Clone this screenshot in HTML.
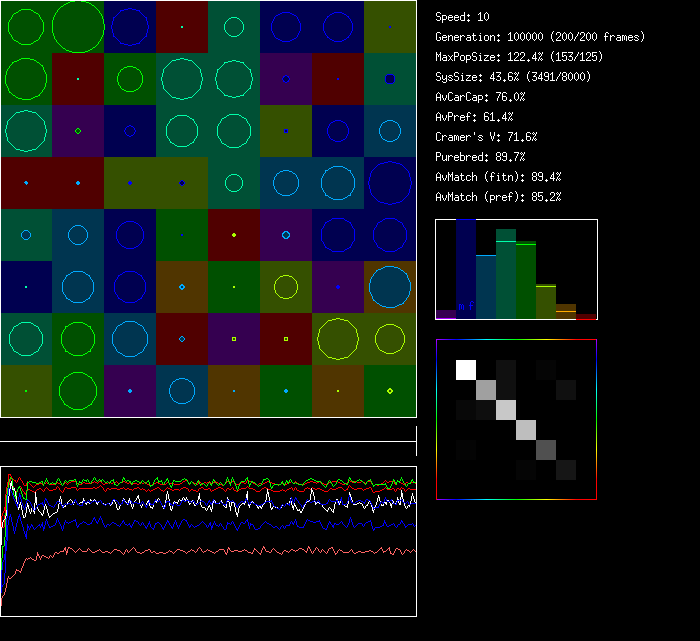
<!DOCTYPE html>
<html lang="en"><head><meta charset="utf-8"><title>Simulation</title>
<style>html,body{margin:0;padding:0;background:#000;overflow:hidden}body{width:700px;height:641px;position:relative;font-family:"Liberation Mono",monospace}svg{display:block;position:absolute;left:0;top:0}.t{position:absolute;left:436px;margin:0;font:10px/13px "Liberation Mono",monospace;color:transparent;white-space:pre;height:13px;overflow:hidden}</style></head><body>
<svg width="700" height="641" viewBox="0 0 700 641" shape-rendering="crispEdges">
<rect width="700" height="641" fill="#000"/>
<rect x="0" y="1" width="52" height="52" fill="#005000"/>
<rect x="52" y="1" width="52" height="52" fill="#005000"/>
<rect x="104" y="1" width="52" height="52" fill="#000050"/>
<rect x="156" y="1" width="52" height="52" fill="#500000"/>
<rect x="208" y="1" width="52" height="52" fill="#005035"/>
<rect x="260" y="1" width="52" height="52" fill="#000050"/>
<rect x="312" y="1" width="52" height="52" fill="#000050"/>
<rect x="364" y="1" width="52" height="52" fill="#355000"/>
<rect x="0" y="53" width="52" height="52" fill="#005000"/>
<rect x="52" y="53" width="52" height="52" fill="#500000"/>
<rect x="104" y="53" width="52" height="52" fill="#005000"/>
<rect x="156" y="53" width="52" height="52" fill="#005035"/>
<rect x="208" y="53" width="52" height="52" fill="#005035"/>
<rect x="260" y="53" width="52" height="52" fill="#350050"/>
<rect x="312" y="53" width="52" height="52" fill="#500000"/>
<rect x="364" y="53" width="52" height="52" fill="#005035"/>
<rect x="0" y="105" width="52" height="52" fill="#005035"/>
<rect x="52" y="105" width="52" height="52" fill="#350050"/>
<rect x="104" y="105" width="52" height="52" fill="#000050"/>
<rect x="156" y="105" width="52" height="52" fill="#005035"/>
<rect x="208" y="105" width="52" height="52" fill="#005035"/>
<rect x="260" y="105" width="52" height="52" fill="#355000"/>
<rect x="312" y="105" width="52" height="52" fill="#000050"/>
<rect x="364" y="105" width="52" height="52" fill="#003550"/>
<rect x="0" y="157" width="52" height="52" fill="#500000"/>
<rect x="52" y="157" width="52" height="52" fill="#500000"/>
<rect x="104" y="157" width="52" height="52" fill="#355000"/>
<rect x="156" y="157" width="52" height="52" fill="#355000"/>
<rect x="208" y="157" width="52" height="52" fill="#005035"/>
<rect x="260" y="157" width="52" height="52" fill="#003550"/>
<rect x="312" y="157" width="52" height="52" fill="#003550"/>
<rect x="364" y="157" width="52" height="52" fill="#000050"/>
<rect x="0" y="209" width="52" height="52" fill="#005035"/>
<rect x="52" y="209" width="52" height="52" fill="#003550"/>
<rect x="104" y="209" width="52" height="52" fill="#000050"/>
<rect x="156" y="209" width="52" height="52" fill="#005000"/>
<rect x="208" y="209" width="52" height="52" fill="#500000"/>
<rect x="260" y="209" width="52" height="52" fill="#350050"/>
<rect x="312" y="209" width="52" height="52" fill="#000050"/>
<rect x="364" y="209" width="52" height="52" fill="#000050"/>
<rect x="0" y="261" width="52" height="52" fill="#000050"/>
<rect x="52" y="261" width="52" height="52" fill="#003550"/>
<rect x="104" y="261" width="52" height="52" fill="#000050"/>
<rect x="156" y="261" width="52" height="52" fill="#503500"/>
<rect x="208" y="261" width="52" height="52" fill="#005000"/>
<rect x="260" y="261" width="52" height="52" fill="#355000"/>
<rect x="312" y="261" width="52" height="52" fill="#350050"/>
<rect x="364" y="261" width="52" height="52" fill="#503500"/>
<rect x="0" y="313" width="52" height="52" fill="#005035"/>
<rect x="52" y="313" width="52" height="52" fill="#005000"/>
<rect x="104" y="313" width="52" height="52" fill="#003550"/>
<rect x="156" y="313" width="52" height="52" fill="#500000"/>
<rect x="208" y="313" width="52" height="52" fill="#350050"/>
<rect x="260" y="313" width="52" height="52" fill="#500000"/>
<rect x="312" y="313" width="52" height="52" fill="#355000"/>
<rect x="364" y="313" width="52" height="52" fill="#355000"/>
<rect x="0" y="365" width="52" height="52" fill="#355000"/>
<rect x="52" y="365" width="52" height="52" fill="#005000"/>
<rect x="104" y="365" width="52" height="52" fill="#350050"/>
<rect x="156" y="365" width="52" height="52" fill="#003550"/>
<rect x="208" y="365" width="52" height="52" fill="#503500"/>
<rect x="260" y="365" width="52" height="52" fill="#005000"/>
<rect x="312" y="365" width="52" height="52" fill="#503500"/>
<rect x="364" y="365" width="52" height="52" fill="#005000"/>
<rect x="436" y="310" width="20" height="9" fill="#350050"/>
<rect x="456" y="220" width="20" height="99" fill="#000050"/>
<rect x="476" y="256" width="20" height="63" fill="#003550"/>
<rect x="496" y="229" width="20" height="90" fill="#005035"/>
<rect x="516" y="241" width="20" height="78" fill="#005000"/>
<rect x="536" y="284" width="20" height="35" fill="#355000"/>
<rect x="556" y="304" width="20" height="15" fill="#503500"/>
<rect x="576" y="314" width="20" height="5" fill="#500000"/>
<rect x="456" y="360" width="20" height="20" fill="#ffffff"/>
<rect x="496" y="360" width="20" height="20" fill="#101010"/>
<rect x="536" y="360" width="20" height="20" fill="#050505"/>
<rect x="476" y="380" width="20" height="20" fill="#a0a0a0"/>
<rect x="496" y="380" width="20" height="20" fill="#101010"/>
<rect x="556" y="380" width="20" height="20" fill="#101010"/>
<rect x="456" y="400" width="20" height="20" fill="#080808"/>
<rect x="476" y="400" width="20" height="20" fill="#0e0e0e"/>
<rect x="496" y="400" width="20" height="20" fill="#c8c8c8"/>
<rect x="516" y="420" width="20" height="20" fill="#bebebe"/>
<rect x="456" y="440" width="20" height="20" fill="#040404"/>
<rect x="536" y="440" width="20" height="20" fill="#505050"/>
<rect x="516" y="460" width="20" height="20" fill="#050505"/>
<rect x="556" y="460" width="20" height="20" fill="#161616"/>
<path fill="#ffffff" d="M0 0h417v1h-417zM0 1h1v417h-1zM416 1h1v417h-1zM437 12h3v1h-3zM464 12h1v9h-1zM480 12h1v9h-1zM486 12h1v1h-1zM436 13h1v3h-1zM440 13h1v1h-1zM479 13h1v1h-1zM485 13h1v1h-1zM487 13h1v1h-1zM468 14h1v3h-1zM478 14h1v1h-1zM484 14h1v5h-1zM488 14h1v5h-1zM442 15h4v1h-4zM449 15h3v1h-3zM455 15h3v1h-3zM461 15h3v1h-3zM467 15h1v1h-1zM469 15h1v1h-1zM437 16h3v1h-3zM442 16h1v7h-1zM446 16h1v3h-1zM448 16h1v4h-1zM452 16h1v2h-1zM454 16h1v4h-1zM458 16h1v2h-1zM460 16h1v4h-1zM440 17h1v3h-1zM449 17h3v1h-3zM455 17h3v1h-3zM436 19h1v1h-1zM443 19h3v1h-3zM452 19h1v1h-1zM458 19h1v1h-1zM468 19h1v3h-1zM485 19h1v1h-1zM487 19h1v1h-1zM437 20h3v1h-3zM449 20h3v1h-3zM455 20h3v1h-3zM461 20h3v1h-3zM467 20h1v1h-1zM469 20h1v1h-1zM478 20h2v1h-2zM481 20h2v1h-2zM486 20h1v1h-1zM553 31h1v1h-1zM641 31h1v1h-1zM437 32h3v1h-3zM510 32h1v9h-1zM516 32h1v1h-1zM522 32h1v1h-1zM528 32h1v1h-1zM534 32h1v1h-1zM540 32h1v1h-1zM552 32h1v2h-1zM557 32h3v1h-3zM564 32h1v1h-1zM570 32h1v1h-1zM578 32h1v2h-1zM581 32h3v1h-3zM588 32h1v1h-1zM594 32h1v1h-1zM606 32h2v1h-2zM642 32h1v2h-1zM436 33h1v7h-1zM440 33h1v1h-1zM473 33h1v7h-1zM480 33h1v1h-1zM509 33h1v1h-1zM515 33h1v1h-1zM517 33h1v1h-1zM521 33h1v1h-1zM523 33h1v1h-1zM527 33h1v1h-1zM529 33h1v1h-1zM533 33h1v1h-1zM535 33h1v1h-1zM539 33h1v1h-1zM541 33h1v1h-1zM556 33h1v2h-1zM560 33h1v3h-1zM563 33h1v1h-1zM565 33h1v1h-1zM569 33h1v1h-1zM571 33h1v1h-1zM580 33h1v2h-1zM584 33h1v3h-1zM587 33h1v1h-1zM589 33h1v1h-1zM593 33h1v1h-1zM595 33h1v1h-1zM605 33h1v8h-1zM608 33h1v1h-1zM498 34h1v3h-1zM508 34h1v1h-1zM514 34h1v5h-1zM518 34h1v5h-1zM520 34h1v5h-1zM524 34h1v5h-1zM526 34h1v5h-1zM530 34h1v5h-1zM532 34h1v5h-1zM536 34h1v5h-1zM538 34h1v5h-1zM542 34h1v5h-1zM551 34h1v5h-1zM562 34h1v5h-1zM566 34h1v5h-1zM568 34h1v5h-1zM572 34h1v5h-1zM577 34h1v2h-1zM586 34h1v5h-1zM590 34h1v5h-1zM592 34h1v5h-1zM596 34h1v5h-1zM643 34h1v5h-1zM443 35h3v1h-3zM448 35h1v6h-1zM450 35h2v1h-2zM455 35h3v1h-3zM460 35h1v6h-1zM462 35h2v1h-2zM467 35h3v1h-3zM472 35h1v1h-1zM474 35h2v1h-2zM479 35h2v1h-2zM485 35h3v1h-3zM490 35h1v6h-1zM492 35h2v1h-2zM497 35h1v1h-1zM499 35h1v1h-1zM610 35h1v6h-1zM612 35h2v1h-2zM617 35h3v1h-3zM622 35h2v1h-2zM625 35h1v1h-1zM629 35h3v1h-3zM635 35h3v1h-3zM442 36h1v4h-1zM446 36h1v2h-1zM449 36h1v1h-1zM452 36h1v5h-1zM454 36h1v4h-1zM458 36h1v2h-1zM461 36h1v1h-1zM464 36h1v1h-1zM470 36h1v5h-1zM480 36h1v5h-1zM484 36h1v4h-1zM488 36h1v4h-1zM491 36h1v1h-1zM494 36h1v5h-1zM559 36h1v1h-1zM576 36h1v1h-1zM583 36h1v1h-1zM604 36h1v1h-1zM606 36h2v1h-2zM611 36h1v1h-1zM614 36h1v1h-1zM620 36h1v5h-1zM622 36h1v5h-1zM624 36h1v4h-1zM626 36h1v5h-1zM628 36h1v4h-1zM632 36h1v2h-1zM634 36h1v1h-1zM638 36h1v1h-1zM439 37h2v1h-2zM443 37h3v1h-3zM455 37h3v1h-3zM467 37h3v1h-3zM558 37h1v1h-1zM575 37h1v2h-1zM582 37h1v1h-1zM617 37h3v1h-3zM629 37h3v1h-3zM635 37h2v1h-2zM440 38h1v2h-1zM466 38h1v2h-1zM557 38h1v1h-1zM581 38h1v1h-1zM616 38h1v2h-1zM637 38h1v1h-1zM446 39h1v1h-1zM458 39h1v1h-1zM476 39h1v1h-1zM498 39h1v3h-1zM515 39h1v1h-1zM517 39h1v1h-1zM521 39h1v1h-1zM523 39h1v1h-1zM527 39h1v1h-1zM529 39h1v1h-1zM533 39h1v1h-1zM535 39h1v1h-1zM539 39h1v1h-1zM541 39h1v1h-1zM552 39h1v2h-1zM556 39h1v2h-1zM563 39h1v1h-1zM565 39h1v1h-1zM569 39h1v1h-1zM571 39h1v1h-1zM574 39h1v2h-1zM580 39h1v2h-1zM587 39h1v1h-1zM589 39h1v1h-1zM593 39h1v1h-1zM595 39h1v1h-1zM632 39h1v1h-1zM634 39h1v1h-1zM638 39h1v1h-1zM642 39h1v2h-1zM437 40h3v1h-3zM443 40h3v1h-3zM455 40h3v1h-3zM467 40h3v1h-3zM474 40h2v1h-2zM479 40h1v1h-1zM481 40h1v1h-1zM485 40h3v1h-3zM497 40h1v1h-1zM499 40h1v1h-1zM508 40h2v1h-2zM511 40h2v1h-2zM516 40h1v1h-1zM522 40h1v1h-1zM528 40h1v1h-1zM534 40h1v1h-1zM540 40h1v1h-1zM557 40h4v1h-4zM564 40h1v1h-1zM570 40h1v1h-1zM581 40h4v1h-4zM588 40h1v1h-1zM594 40h1v1h-1zM617 40h3v1h-3zM629 40h3v1h-3zM635 40h3v1h-3zM553 41h1v1h-1zM641 41h1v1h-1zM553 51h1v1h-1zM599 51h1v1h-1zM436 52h1v9h-1zM440 52h1v9h-1zM454 52h4v1h-4zM473 52h3v1h-3zM510 52h1v9h-1zM515 52h3v1h-3zM521 52h3v1h-3zM535 52h1v9h-1zM539 52h1v1h-1zM542 52h1v2h-1zM552 52h1v2h-1zM558 52h1v9h-1zM562 52h5v1h-5zM568 52h5v1h-5zM578 52h1v2h-1zM582 52h1v9h-1zM587 52h3v1h-3zM592 52h5v1h-5zM600 52h1v2h-1zM454 53h1v8h-1zM458 53h1v3h-1zM472 53h1v3h-1zM476 53h1v1h-1zM480 53h1v1h-1zM509 53h1v1h-1zM514 53h1v2h-1zM518 53h1v3h-1zM520 53h1v2h-1zM524 53h1v3h-1zM538 53h1v1h-1zM540 53h1v1h-1zM557 53h1v1h-1zM562 53h1v4h-1zM572 53h1v1h-1zM581 53h1v1h-1zM586 53h1v2h-1zM590 53h1v3h-1zM592 53h1v4h-1zM437 54h1v1h-1zM439 54h1v1h-1zM498 54h1v3h-1zM508 54h1v1h-1zM534 54h1v1h-1zM539 54h1v1h-1zM541 54h1v2h-1zM551 54h1v5h-1zM556 54h1v1h-1zM571 54h1v1h-1zM577 54h1v2h-1zM580 54h1v1h-1zM601 54h1v5h-1zM438 55h1v2h-1zM443 55h3v1h-3zM448 55h1v1h-1zM452 55h1v1h-1zM461 55h3v1h-3zM466 55h4v1h-4zM479 55h2v1h-2zM484 55h5v1h-5zM491 55h3v1h-3zM497 55h1v1h-1zM499 55h1v1h-1zM533 55h1v2h-1zM564 55h2v1h-2zM570 55h1v2h-1zM594 55h2v1h-2zM446 56h1v5h-1zM449 56h1v1h-1zM451 56h1v1h-1zM455 56h3v1h-3zM460 56h1v4h-1zM464 56h1v4h-1zM466 56h1v7h-1zM470 56h1v3h-1zM473 56h3v1h-3zM480 56h1v5h-1zM487 56h1v1h-1zM490 56h1v4h-1zM494 56h1v2h-1zM517 56h1v1h-1zM523 56h1v1h-1zM540 56h1v1h-1zM563 56h1v1h-1zM566 56h1v4h-1zM569 56h1v1h-1zM571 56h1v1h-1zM576 56h1v1h-1zM589 56h1v1h-1zM593 56h1v1h-1zM596 56h1v4h-1zM443 57h3v1h-3zM450 57h1v2h-1zM476 57h1v3h-1zM486 57h1v1h-1zM491 57h3v1h-3zM516 57h1v1h-1zM522 57h1v1h-1zM532 57h1v2h-1zM539 57h1v2h-1zM572 57h1v3h-1zM575 57h1v2h-1zM588 57h1v1h-1zM442 58h1v2h-1zM485 58h1v1h-1zM515 58h1v1h-1zM521 58h1v1h-1zM533 58h2v1h-2zM536 58h1v1h-1zM541 58h1v1h-1zM587 58h1v1h-1zM449 59h1v1h-1zM451 59h1v1h-1zM467 59h3v1h-3zM472 59h1v1h-1zM484 59h1v2h-1zM494 59h1v1h-1zM498 59h1v3h-1zM514 59h1v2h-1zM520 59h1v2h-1zM528 59h1v3h-1zM538 59h1v2h-1zM540 59h1v1h-1zM542 59h1v1h-1zM552 59h1v2h-1zM562 59h1v1h-1zM568 59h1v1h-1zM574 59h1v2h-1zM586 59h1v2h-1zM592 59h1v1h-1zM600 59h1v2h-1zM443 60h3v1h-3zM448 60h1v1h-1zM452 60h1v1h-1zM461 60h3v1h-3zM473 60h3v1h-3zM479 60h1v1h-1zM481 60h1v1h-1zM485 60h4v1h-4zM491 60h3v1h-3zM497 60h1v1h-1zM499 60h1v1h-1zM508 60h2v1h-2zM511 60h2v1h-2zM515 60h4v1h-4zM521 60h4v1h-4zM527 60h1v1h-1zM529 60h1v1h-1zM541 60h1v1h-1zM556 60h2v1h-2zM559 60h2v1h-2zM563 60h3v1h-3zM569 60h3v1h-3zM580 60h2v1h-2zM583 60h2v1h-2zM587 60h4v1h-4zM593 60h3v1h-3zM553 61h1v1h-1zM599 61h1v1h-1zM529 71h1v1h-1zM587 71h1v1h-1zM437 72h3v1h-3zM455 72h3v1h-3zM493 72h1v9h-1zM496 72h5v1h-5zM509 72h3v1h-3zM515 72h1v1h-1zM518 72h1v2h-1zM528 72h1v2h-1zM532 72h5v1h-5zM541 72h1v9h-1zM545 72h3v1h-3zM552 72h1v9h-1zM560 72h1v2h-1zM563 72h3v1h-3zM570 72h1v1h-1zM576 72h1v1h-1zM582 72h1v1h-1zM588 72h1v2h-1zM436 73h1v3h-1zM440 73h1v1h-1zM454 73h1v3h-1zM458 73h1v1h-1zM462 73h1v1h-1zM500 73h1v1h-1zM508 73h1v7h-1zM512 73h1v1h-1zM514 73h1v1h-1zM516 73h1v1h-1zM536 73h1v1h-1zM544 73h1v3h-1zM548 73h1v7h-1zM551 73h1v1h-1zM562 73h1v3h-1zM566 73h1v3h-1zM569 73h1v1h-1zM571 73h1v1h-1zM575 73h1v1h-1zM577 73h1v1h-1zM581 73h1v1h-1zM583 73h1v1h-1zM480 74h1v3h-1zM492 74h1v1h-1zM499 74h1v1h-1zM515 74h1v1h-1zM517 74h1v2h-1zM527 74h1v5h-1zM535 74h1v1h-1zM540 74h1v1h-1zM550 74h1v1h-1zM559 74h1v2h-1zM568 74h1v5h-1zM572 74h1v5h-1zM574 74h1v5h-1zM578 74h1v5h-1zM580 74h1v5h-1zM584 74h1v5h-1zM589 74h1v5h-1zM442 75h1v4h-1zM446 75h1v7h-1zM449 75h3v1h-3zM461 75h2v1h-2zM466 75h5v1h-5zM473 75h3v1h-3zM479 75h1v1h-1zM481 75h1v1h-1zM491 75h1v2h-1zM498 75h1v2h-1zM534 75h1v2h-1zM539 75h1v2h-1zM437 76h3v1h-3zM448 76h1v1h-1zM452 76h1v1h-1zM455 76h3v1h-3zM462 76h1v5h-1zM469 76h1v1h-1zM472 76h1v4h-1zM476 76h1v2h-1zM497 76h1v1h-1zM499 76h1v1h-1zM509 76h3v1h-3zM516 76h1v1h-1zM533 76h1v1h-1zM535 76h1v1h-1zM545 76h3v1h-3zM558 76h1v1h-1zM563 76h3v1h-3zM440 77h1v3h-1zM449 77h2v1h-2zM458 77h1v3h-1zM468 77h1v1h-1zM473 77h3v1h-3zM490 77h1v2h-1zM500 77h1v3h-1zM512 77h1v3h-1zM515 77h1v2h-1zM536 77h1v3h-1zM538 77h1v2h-1zM557 77h1v2h-1zM562 77h1v3h-1zM566 77h1v3h-1zM445 78h1v1h-1zM451 78h1v1h-1zM467 78h1v1h-1zM491 78h2v1h-2zM494 78h1v1h-1zM517 78h1v1h-1zM539 78h2v1h-2zM542 78h1v1h-1zM436 79h1v1h-1zM443 79h2v1h-2zM448 79h1v1h-1zM452 79h1v1h-1zM454 79h1v1h-1zM466 79h1v2h-1zM476 79h1v1h-1zM480 79h1v3h-1zM496 79h1v1h-1zM504 79h1v3h-1zM514 79h1v2h-1zM516 79h1v1h-1zM518 79h1v1h-1zM528 79h1v2h-1zM532 79h1v1h-1zM544 79h1v1h-1zM556 79h1v2h-1zM569 79h1v1h-1zM571 79h1v1h-1zM575 79h1v1h-1zM577 79h1v1h-1zM581 79h1v1h-1zM583 79h1v1h-1zM588 79h1v2h-1zM437 80h3v1h-3zM449 80h3v1h-3zM455 80h3v1h-3zM461 80h1v1h-1zM463 80h1v1h-1zM467 80h4v1h-4zM473 80h3v1h-3zM479 80h1v1h-1zM481 80h1v1h-1zM497 80h3v1h-3zM503 80h1v1h-1zM505 80h1v1h-1zM509 80h3v1h-3zM517 80h1v1h-1zM533 80h3v1h-3zM545 80h3v1h-3zM550 80h2v1h-2zM553 80h2v1h-2zM563 80h3v1h-3zM570 80h1v1h-1zM576 80h1v1h-1zM582 80h1v1h-1zM442 81h1v1h-1zM529 81h1v1h-1zM587 81h1v1h-1zM443 82h3v1h-3zM438 92h1v1h-1zM449 92h3v1h-3zM467 92h3v1h-3zM496 92h5v1h-5zM503 92h3v1h-3zM516 92h1v1h-1zM521 92h1v1h-1zM524 92h1v2h-1zM437 93h1v1h-1zM439 93h1v1h-1zM448 93h1v7h-1zM452 93h1v1h-1zM466 93h1v7h-1zM470 93h1v1h-1zM500 93h1v1h-1zM502 93h1v7h-1zM506 93h1v1h-1zM515 93h1v1h-1zM517 93h1v1h-1zM520 93h1v1h-1zM522 93h1v1h-1zM436 94h1v7h-1zM440 94h1v7h-1zM486 94h1v3h-1zM499 94h1v2h-1zM514 94h1v5h-1zM518 94h1v5h-1zM521 94h1v1h-1zM523 94h1v2h-1zM442 95h1v3h-1zM446 95h1v3h-1zM455 95h3v1h-3zM460 95h1v6h-1zM462 95h2v1h-2zM473 95h3v1h-3zM478 95h4v1h-4zM485 95h1v1h-1zM487 95h1v1h-1zM458 96h1v5h-1zM461 96h1v1h-1zM464 96h1v1h-1zM476 96h1v5h-1zM478 96h1v7h-1zM482 96h1v3h-1zM498 96h1v2h-1zM503 96h3v1h-3zM522 96h1v1h-1zM437 97h3v1h-3zM455 97h3v1h-3zM473 97h3v1h-3zM506 97h1v3h-1zM521 97h1v2h-1zM443 98h1v2h-1zM445 98h1v2h-1zM454 98h1v2h-1zM472 98h1v2h-1zM497 98h1v3h-1zM523 98h1v1h-1zM452 99h1v1h-1zM470 99h1v1h-1zM479 99h3v1h-3zM486 99h1v3h-1zM510 99h1v3h-1zM515 99h1v1h-1zM517 99h1v1h-1zM520 99h1v2h-1zM522 99h1v1h-1zM524 99h1v1h-1zM444 100h1v1h-1zM449 100h3v1h-3zM455 100h3v1h-3zM467 100h3v1h-3zM473 100h3v1h-3zM485 100h1v1h-1zM487 100h1v1h-1zM503 100h3v1h-3zM509 100h1v1h-1zM511 100h1v1h-1zM516 100h1v1h-1zM523 100h1v1h-1zM438 112h1v1h-1zM448 112h4v1h-4zM468 112h2v1h-2zM485 112h3v1h-3zM492 112h1v9h-1zM505 112h1v9h-1zM509 112h1v1h-1zM512 112h1v2h-1zM437 113h1v1h-1zM439 113h1v1h-1zM448 113h1v8h-1zM452 113h1v3h-1zM467 113h1v8h-1zM470 113h1v1h-1zM484 113h1v7h-1zM488 113h1v1h-1zM491 113h1v1h-1zM508 113h1v1h-1zM510 113h1v1h-1zM436 114h1v7h-1zM440 114h1v7h-1zM474 114h1v3h-1zM490 114h1v1h-1zM504 114h1v1h-1zM509 114h1v1h-1zM511 114h1v2h-1zM442 115h1v3h-1zM446 115h1v3h-1zM454 115h1v6h-1zM456 115h2v1h-2zM461 115h3v1h-3zM473 115h1v1h-1zM475 115h1v1h-1zM503 115h1v2h-1zM449 116h3v1h-3zM455 116h1v1h-1zM458 116h1v1h-1zM460 116h1v4h-1zM464 116h1v2h-1zM466 116h1v1h-1zM468 116h2v1h-2zM485 116h3v1h-3zM510 116h1v1h-1zM437 117h3v1h-3zM461 117h3v1h-3zM488 117h1v3h-1zM502 117h1v2h-1zM509 117h1v2h-1zM443 118h1v2h-1zM445 118h1v2h-1zM503 118h2v1h-2zM506 118h1v1h-1zM511 118h1v1h-1zM464 119h1v1h-1zM474 119h1v3h-1zM498 119h1v3h-1zM508 119h1v2h-1zM510 119h1v1h-1zM512 119h1v1h-1zM444 120h1v1h-1zM461 120h3v1h-3zM473 120h1v1h-1zM475 120h1v1h-1zM485 120h3v1h-3zM490 120h2v1h-2zM493 120h2v1h-2zM497 120h1v1h-1zM499 120h1v1h-1zM511 120h1v1h-1zM437 132h3v1h-3zM474 132h1v3h-1zM490 132h1v4h-1zM494 132h1v4h-1zM508 132h5v1h-5zM516 132h1v9h-1zM527 132h3v1h-3zM533 132h1v1h-1zM536 132h1v2h-1zM436 133h1v7h-1zM440 133h1v1h-1zM512 133h1v1h-1zM515 133h1v1h-1zM526 133h1v7h-1zM530 133h1v1h-1zM532 133h1v1h-1zM534 133h1v1h-1zM498 134h1v3h-1zM511 134h1v2h-1zM514 134h1v1h-1zM533 134h1v1h-1zM535 134h1v2h-1zM442 135h1v6h-1zM444 135h2v1h-2zM449 135h3v1h-3zM454 135h2v1h-2zM457 135h1v1h-1zM461 135h3v1h-3zM466 135h1v6h-1zM468 135h2v1h-2zM479 135h3v1h-3zM497 135h1v1h-1zM499 135h1v1h-1zM443 136h1v1h-1zM446 136h1v1h-1zM452 136h1v5h-1zM454 136h1v5h-1zM456 136h1v4h-1zM458 136h1v5h-1zM460 136h1v4h-1zM464 136h1v2h-1zM467 136h1v1h-1zM470 136h1v1h-1zM478 136h1v1h-1zM482 136h1v1h-1zM491 136h1v3h-1zM493 136h1v3h-1zM510 136h1v2h-1zM527 136h3v1h-3zM534 136h1v1h-1zM449 137h3v1h-3zM461 137h3v1h-3zM479 137h2v1h-2zM530 137h1v3h-1zM533 137h1v2h-1zM448 138h1v2h-1zM481 138h1v1h-1zM509 138h1v3h-1zM535 138h1v1h-1zM440 139h1v1h-1zM464 139h1v1h-1zM478 139h1v1h-1zM482 139h1v1h-1zM492 139h1v2h-1zM498 139h1v3h-1zM522 139h1v3h-1zM532 139h1v2h-1zM534 139h1v1h-1zM536 139h1v1h-1zM437 140h3v1h-3zM449 140h3v1h-3zM461 140h3v1h-3zM479 140h3v1h-3zM497 140h1v1h-1zM499 140h1v1h-1zM514 140h2v1h-2zM517 140h2v1h-2zM521 140h1v1h-1zM523 140h1v1h-1zM527 140h3v1h-3zM535 140h1v1h-1zM436 152h4v1h-4zM460 152h1v9h-1zM482 152h1v9h-1zM497 152h3v1h-3zM503 152h3v1h-3zM514 152h5v1h-5zM521 152h1v1h-1zM524 152h1v2h-1zM436 153h1v8h-1zM440 153h1v3h-1zM496 153h1v3h-1zM500 153h1v3h-1zM502 153h1v3h-1zM506 153h1v7h-1zM518 153h1v1h-1zM520 153h1v1h-1zM522 153h1v1h-1zM486 154h1v3h-1zM517 154h1v2h-1zM521 154h1v1h-1zM523 154h1v2h-1zM442 155h1v5h-1zM446 155h1v6h-1zM448 155h1v6h-1zM450 155h2v1h-2zM455 155h3v1h-3zM461 155h3v1h-3zM466 155h1v6h-1zM468 155h2v1h-2zM473 155h3v1h-3zM479 155h3v1h-3zM485 155h1v1h-1zM487 155h1v1h-1zM437 156h3v1h-3zM449 156h1v1h-1zM452 156h1v1h-1zM454 156h1v4h-1zM458 156h1v2h-1zM464 156h1v4h-1zM467 156h1v1h-1zM470 156h1v1h-1zM472 156h1v4h-1zM476 156h1v2h-1zM478 156h1v4h-1zM497 156h3v1h-3zM503 156h3v1h-3zM516 156h1v2h-1zM522 156h1v1h-1zM455 157h3v1h-3zM473 157h3v1h-3zM496 157h1v3h-1zM500 157h1v3h-1zM521 157h1v2h-1zM515 158h1v3h-1zM523 158h1v1h-1zM445 159h1v1h-1zM458 159h1v1h-1zM476 159h1v1h-1zM486 159h1v3h-1zM502 159h1v1h-1zM510 159h1v3h-1zM520 159h1v2h-1zM522 159h1v1h-1zM524 159h1v1h-1zM443 160h2v1h-2zM455 160h3v1h-3zM461 160h3v1h-3zM473 160h3v1h-3zM479 160h3v1h-3zM485 160h1v1h-1zM487 160h1v1h-1zM497 160h3v1h-3zM503 160h3v1h-3zM509 160h1v1h-1zM511 160h1v1h-1zM523 160h1v1h-1zM487 171h1v1h-1zM515 171h1v1h-1zM438 172h1v1h-1zM448 172h1v9h-1zM452 172h1v9h-1zM472 172h1v9h-1zM486 172h1v2h-1zM492 172h2v1h-2zM516 172h1v2h-1zM533 172h3v1h-3zM539 172h3v1h-3zM553 172h1v9h-1zM557 172h1v1h-1zM560 172h1v2h-1zM437 173h1v1h-1zM439 173h1v1h-1zM461 173h1v7h-1zM491 173h1v8h-1zM494 173h1v1h-1zM498 173h1v1h-1zM503 173h1v7h-1zM532 173h1v3h-1zM536 173h1v3h-1zM538 173h1v3h-1zM542 173h1v7h-1zM556 173h1v1h-1zM558 173h1v1h-1zM436 174h1v7h-1zM440 174h1v7h-1zM449 174h1v1h-1zM451 174h1v1h-1zM485 174h1v5h-1zM517 174h1v5h-1zM522 174h1v3h-1zM552 174h1v1h-1zM557 174h1v1h-1zM559 174h1v2h-1zM442 175h1v3h-1zM446 175h1v3h-1zM450 175h1v2h-1zM455 175h3v1h-3zM460 175h1v1h-1zM462 175h2v1h-2zM467 175h3v1h-3zM474 175h2v1h-2zM497 175h2v1h-2zM502 175h1v1h-1zM504 175h2v1h-2zM508 175h1v6h-1zM510 175h2v1h-2zM521 175h1v1h-1zM523 175h1v1h-1zM551 175h1v2h-1zM458 176h1v5h-1zM466 176h1v4h-1zM470 176h1v1h-1zM473 176h1v1h-1zM476 176h1v5h-1zM490 176h1v1h-1zM492 176h2v1h-2zM498 176h1v5h-1zM509 176h1v1h-1zM512 176h1v5h-1zM533 176h3v1h-3zM539 176h3v1h-3zM558 176h1v1h-1zM437 177h3v1h-3zM455 177h3v1h-3zM532 177h1v3h-1zM536 177h1v3h-1zM550 177h1v2h-1zM557 177h1v2h-1zM443 178h1v2h-1zM445 178h1v2h-1zM454 178h1v2h-1zM551 178h2v1h-2zM554 178h1v1h-1zM559 178h1v1h-1zM464 179h1v1h-1zM470 179h1v1h-1zM486 179h1v2h-1zM506 179h1v1h-1zM516 179h1v2h-1zM522 179h1v3h-1zM538 179h1v1h-1zM546 179h1v3h-1zM556 179h1v2h-1zM558 179h1v1h-1zM560 179h1v1h-1zM444 180h1v1h-1zM455 180h3v1h-3zM462 180h2v1h-2zM467 180h3v1h-3zM497 180h1v1h-1zM499 180h1v1h-1zM504 180h2v1h-2zM521 180h1v1h-1zM523 180h1v1h-1zM533 180h3v1h-3zM539 180h3v1h-3zM545 180h1v1h-1zM547 180h1v1h-1zM559 180h1v1h-1zM487 181h1v1h-1zM515 181h1v1h-1zM487 191h1v1h-1zM515 191h1v1h-1zM438 192h1v1h-1zM448 192h1v9h-1zM452 192h1v9h-1zM472 192h1v9h-1zM486 192h1v2h-1zM510 192h2v1h-2zM516 192h1v2h-1zM533 192h3v1h-3zM538 192h5v1h-5zM551 192h3v1h-3zM557 192h1v1h-1zM560 192h1v2h-1zM437 193h1v1h-1zM439 193h1v1h-1zM461 193h1v7h-1zM509 193h1v8h-1zM512 193h1v1h-1zM532 193h1v3h-1zM536 193h1v3h-1zM538 193h1v4h-1zM550 193h1v2h-1zM554 193h1v3h-1zM556 193h1v1h-1zM558 193h1v1h-1zM436 194h1v7h-1zM440 194h1v7h-1zM449 194h1v1h-1zM451 194h1v1h-1zM485 194h1v5h-1zM517 194h1v5h-1zM522 194h1v3h-1zM557 194h1v1h-1zM559 194h1v2h-1zM442 195h1v3h-1zM446 195h1v3h-1zM450 195h1v2h-1zM455 195h3v1h-3zM460 195h1v1h-1zM462 195h2v1h-2zM467 195h3v1h-3zM474 195h2v1h-2zM490 195h4v1h-4zM496 195h1v6h-1zM498 195h2v1h-2zM503 195h3v1h-3zM521 195h1v1h-1zM523 195h1v1h-1zM540 195h2v1h-2zM458 196h1v5h-1zM466 196h1v4h-1zM470 196h1v1h-1zM473 196h1v1h-1zM476 196h1v5h-1zM490 196h1v7h-1zM494 196h1v3h-1zM497 196h1v1h-1zM500 196h1v1h-1zM502 196h1v4h-1zM506 196h1v2h-1zM508 196h1v1h-1zM510 196h2v1h-2zM533 196h3v1h-3zM539 196h1v1h-1zM542 196h1v4h-1zM553 196h1v1h-1zM558 196h1v1h-1zM437 197h3v1h-3zM455 197h3v1h-3zM503 197h3v1h-3zM532 197h1v3h-1zM536 197h1v3h-1zM552 197h1v1h-1zM557 197h1v2h-1zM443 198h1v2h-1zM445 198h1v2h-1zM454 198h1v2h-1zM551 198h1v1h-1zM559 198h1v1h-1zM464 199h1v1h-1zM470 199h1v1h-1zM486 199h1v2h-1zM491 199h3v1h-3zM506 199h1v1h-1zM516 199h1v2h-1zM522 199h1v3h-1zM538 199h1v1h-1zM546 199h1v3h-1zM550 199h1v2h-1zM556 199h1v2h-1zM558 199h1v1h-1zM560 199h1v1h-1zM444 200h1v1h-1zM455 200h3v1h-3zM462 200h2v1h-2zM467 200h3v1h-3zM503 200h3v1h-3zM521 200h1v1h-1zM523 200h1v1h-1zM533 200h3v1h-3zM539 200h3v1h-3zM545 200h1v1h-1zM547 200h1v1h-1zM551 200h4v1h-4zM559 200h1v1h-1zM487 201h1v1h-1zM515 201h1v1h-1zM435 219h21v1h-21zM476 219h122v1h-122zM435 220h1v100h-1zM597 220h1v100h-1zM436 319h140v1h-140zM596 319h1v1h-1zM1 417h415v1h-415zM416 426h1v30h-1zM0 441h416v1h-416zM0 466h417v1h-417zM0 467h1v150h-1zM416 467h1v150h-1zM11 481h1v5h-1zM10 483h1v6h-1zM12 486h1v4h-1zM14 488h1v3h-1zM311 488h1v6h-1zM9 489h1v7h-1zM13 489h1v1h-1zM267 489h1v5h-1zM312 490h1v2h-1zM401 490h1v7h-1zM15 491h1v5h-1zM167 491h1v3h-1zM247 491h1v9h-1zM35 492h1v11h-1zM268 492h1v5h-1zM313 492h1v4h-1zM349 492h1v3h-1zM199 493h1v6h-1zM402 493h1v6h-1zM412 493h1v3h-1zM166 494h1v6h-1zM168 494h1v5h-1zM246 494h1v4h-1zM266 494h1v6h-1zM310 494h1v6h-1zM350 494h1v3h-1zM138 495h1v4h-1zM378 495h1v3h-1zM8 496h1v7h-1zM16 496h1v6h-1zM60 496h1v3h-1zM137 496h1v2h-1zM198 496h1v4h-1zM314 496h1v4h-1zM411 496h1v5h-1zM413 496h1v3h-1zM36 497h1v8h-1zM183 497h1v1h-1zM186 497h1v2h-1zM227 497h1v2h-1zM269 497h1v4h-1zM351 497h1v3h-1zM379 497h1v4h-1zM397 497h1v3h-1zM400 497h1v3h-1zM83 498h1v3h-1zM123 498h1v1h-1zM129 498h1v3h-1zM136 498h1v2h-1zM158 498h1v1h-1zM182 498h1v2h-1zM184 498h1v2h-1zM290 498h1v1h-1zM377 498h1v4h-1zM59 499h1v3h-1zM61 499h1v5h-1zM70 499h1v1h-1zM90 499h1v2h-1zM94 499h1v1h-1zM124 499h1v1h-1zM139 499h1v4h-1zM157 499h1v2h-1zM159 499h1v1h-1zM169 499h1v2h-1zM179 499h1v1h-1zM185 499h1v2h-1zM187 499h1v1h-1zM200 499h1v2h-1zM228 499h1v1h-1zM336 499h2v1h-2zM398 499h1v1h-1zM403 499h1v3h-1zM414 499h1v3h-1zM69 500h1v1h-1zM71 500h1v1h-1zM84 500h1v1h-1zM91 500h1v1h-1zM93 500h1v1h-1zM95 500h1v1h-1zM113 500h2v1h-2zM122 500h1v1h-1zM128 500h1v3h-1zM135 500h1v1h-1zM148 500h1v2h-1zM165 500h1v3h-1zM178 500h1v2h-1zM180 500h2v1h-2zM192 500h1v1h-1zM197 500h1v3h-1zM214 500h1v1h-1zM221 500h1v2h-1zM265 500h1v2h-1zM309 500h1v1h-1zM352 500h1v2h-1zM387 500h2v1h-2zM392 500h1v1h-1zM68 501h1v1h-1zM72 501h1v2h-1zM82 501h1v2h-1zM114 501h1v1h-1zM125 501h1v1h-1zM130 501h1v3h-1zM134 501h1v1h-1zM147 501h1v2h-1zM155 501h2v1h-2zM174 501h1v1h-1zM188 501h1v2h-1zM191 501h1v1h-1zM213 501h1v2h-1zM215 501h1v2h-1zM227 501h2v1h-2zM245 501h1v2h-1zM252 501h1v1h-1zM289 501h1v2h-1zM291 501h1v4h-1zM307 501h2v1h-2zM314 501h1v1h-1zM338 501h1v2h-1zM340 501h1v2h-1zM348 501h1v3h-1zM369 501h1v1h-1zM380 501h1v1h-1zM393 501h1v2h-1zM396 501h1v1h-1zM398 501h1v2h-1zM400 501h1v4h-1zM410 501h1v3h-1zM17 502h1v2h-1zM20 502h1v3h-1zM67 502h1v2h-1zM74 502h1v1h-1zM80 502h2v1h-2zM87 502h2v1h-2zM96 502h1v2h-1zM98 502h1v1h-1zM112 502h1v2h-1zM115 502h1v2h-1zM126 502h1v1h-1zM156 502h1v1h-1zM173 502h1v2h-1zM175 502h3v1h-3zM193 502h1v2h-1zM200 502h1v3h-1zM222 502h1v1h-1zM229 502h1v5h-1zM231 502h3v1h-3zM251 502h1v1h-1zM253 502h1v1h-1zM269 502h1v1h-1zM306 502h1v1h-1zM315 502h1v3h-1zM317 502h2v1h-2zM335 502h1v2h-1zM359 502h1v1h-1zM368 502h1v2h-1zM376 502h1v3h-1zM384 502h3v1h-3zM389 502h1v1h-1zM415 502h1v1h-1zM27 503h1v4h-1zM34 503h1v7h-1zM59 503h1v1h-1zM79 503h1v1h-1zM85 503h2v1h-2zM89 503h1v1h-1zM97 503h1v2h-1zM103 503h1v1h-1zM109 503h1v1h-1zM146 503h1v2h-1zM149 503h1v3h-1zM169 503h1v3h-1zM177 503h1v1h-1zM189 503h2v1h-2zM196 503h1v1h-1zM212 503h1v6h-1zM219 503h1v1h-1zM231 503h1v3h-1zM234 503h1v4h-1zM242 503h3v1h-3zM264 503h1v1h-1zM270 503h1v5h-1zM287 503h1v1h-1zM294 503h1v3h-1zM316 503h1v1h-1zM319 503h1v1h-1zM339 503h1v2h-1zM357 503h2v1h-2zM360 503h2v1h-2zM370 503h1v1h-1zM385 503h2v1h-2zM390 503h1v3h-1zM392 503h1v1h-1zM395 503h1v1h-1zM399 503h1v2h-1zM404 503h1v3h-1zM19 504h1v4h-1zM45 504h1v2h-1zM58 504h1v5h-1zM73 504h1v1h-1zM86 504h1v1h-1zM105 504h1v1h-1zM111 504h1v1h-1zM116 504h1v4h-1zM127 504h1v1h-1zM131 504h1v3h-1zM133 504h1v3h-1zM142 504h1v2h-1zM189 504h1v1h-1zM194 504h1v2h-1zM226 504h1v4h-1zM241 504h1v1h-1zM244 504h1v1h-1zM248 504h1v2h-1zM250 504h1v1h-1zM263 504h1v1h-1zM305 504h1v1h-1zM334 504h1v5h-1zM347 504h1v4h-1zM353 504h4v1h-4zM362 504h1v2h-1zM367 504h1v2h-1zM381 504h1v2h-1zM383 504h1v2h-1zM386 504h1v1h-1zM391 504h1v4h-1zM21 505h1v5h-1zM28 505h1v4h-1zM62 505h1v1h-1zM65 505h1v2h-1zM110 505h1v1h-1zM120 505h1v1h-1zM140 505h1v1h-1zM153 505h1v2h-1zM164 505h1v2h-1zM195 505h1v1h-1zM201 505h1v2h-1zM209 505h1v2h-1zM223 505h1v1h-1zM240 505h1v1h-1zM249 505h1v3h-1zM256 505h1v1h-1zM262 505h1v2h-1zM282 505h1v1h-1zM292 505h1v3h-1zM295 505h1v2h-1zM304 505h1v2h-1zM322 505h1v2h-1zM344 505h1v1h-1zM366 505h1v1h-1zM371 505h1v2h-1zM375 505h1v2h-1zM382 505h1v1h-1zM408 505h2v1h-2zM44 506h1v4h-1zM46 506h1v3h-1zM64 506h1v1h-1zM119 506h1v3h-1zM141 506h1v2h-1zM150 506h1v2h-1zM162 506h1v1h-1zM170 506h1v4h-1zM172 506h1v3h-1zM208 506h1v2h-1zM224 506h1v1h-1zM230 506h1v5h-1zM239 506h1v2h-1zM257 506h1v2h-1zM259 506h2v1h-2zM273 506h1v1h-1zM293 506h1v4h-1zM345 506h2v1h-2zM363 506h1v2h-1zM365 506h1v2h-1zM405 506h1v2h-1zM407 506h1v2h-1zM409 506h1v1h-1zM18 507h1v3h-1zM26 507h1v6h-1zM37 507h1v2h-1zM63 507h1v1h-1zM132 507h1v2h-1zM151 507h2v1h-2zM202 507h3v1h-3zM210 507h1v3h-1zM225 507h1v1h-1zM235 507h1v5h-1zM258 507h1v2h-1zM260 507h2v1h-2zM272 507h1v2h-1zM275 507h1v1h-1zM277 507h1v1h-1zM281 507h1v1h-1zM296 507h1v2h-1zM303 507h1v2h-1zM323 507h1v1h-1zM329 507h1v1h-1zM372 507h1v4h-1zM374 507h1v1h-1zM31 508h1v4h-1zM117 508h1v2h-1zM152 508h1v1h-1zM163 508h1v1h-1zM205 508h1v2h-1zM207 508h1v2h-1zM238 508h1v5h-1zM261 508h1v1h-1zM271 508h1v2h-1zM324 508h1v1h-1zM328 508h1v2h-1zM330 508h1v1h-1zM364 508h1v1h-1zM406 508h1v1h-1zM29 509h1v3h-1zM38 509h1v2h-1zM47 509h1v4h-1zM57 509h1v3h-1zM118 509h1v1h-1zM171 509h1v2h-1zM211 509h1v3h-1zM297 509h1v2h-1zM299 509h1v2h-1zM302 509h1v2h-1zM325 509h1v1h-1zM331 509h1v2h-1zM333 509h1v4h-1zM374 509h1v1h-1zM6 510h1v6h-1zM22 510h1v5h-1zM33 510h1v2h-1zM43 510h1v4h-1zM206 510h1v1h-1zM298 510h1v1h-1zM326 510h2v1h-2zM373 510h1v3h-1zM34 511h1v3h-1zM39 511h1v1h-1zM300 511h2v2h-2zM327 511h1v1h-1zM332 511h1v1h-1zM30 512h1v2h-1zM40 512h1v1h-1zM55 512h2v1h-2zM236 512h1v3h-1zM25 513h1v4h-1zM41 513h1v2h-1zM48 513h1v3h-1zM53 513h2v1h-2zM237 513h1v4h-1zM42 514h1v2h-1zM52 514h1v1h-1zM23 515h1v3h-1zM51 515h1v1h-1zM5 516h1v3h-1zM49 516h2v1h-2zM24 517h1v1h-1zM49 517h1v1h-1zM4 519h1v1h-1zM3 520h1v2h-1zM2 522h1v5h-1zM1 527h1v18h-1zM1 616h415v1h-415z"/>
<path fill="#00ff00" d="M70 1h5v1h-5zM81 1h5v1h-5zM68 2h2v1h-2zM86 2h3v1h-3zM66 3h2v1h-2zM89 3h2v1h-2zM64 4h2v1h-2zM91 4h1v1h-1zM63 5h1v1h-1zM92 5h2v1h-2zM61 6h2v1h-2zM94 6h1v1h-1zM60 7h1v1h-1zM95 7h1v1h-1zM59 8h1v1h-1zM96 8h1v1h-1zM21 9h10v1h-10zM58 9h1v1h-1zM97 9h1v1h-1zM19 10h2v1h-2zM31 10h2v1h-2zM57 10h1v2h-1zM98 10h1v1h-1zM18 11h1v1h-1zM33 11h1v1h-1zM99 11h1v2h-1zM16 12h2v1h-2zM34 12h2v1h-2zM56 12h1v1h-1zM14 13h2v1h-2zM36 13h2v1h-2zM55 13h1v2h-1zM100 13h1v1h-1zM13 14h1v1h-1zM38 14h1v1h-1zM101 14h1v2h-1zM12 15h1v2h-1zM39 15h1v2h-1zM54 15h1v2h-1zM102 16h1v3h-1zM11 17h1v2h-1zM40 17h1v2h-1zM53 17h1v3h-1zM10 19h1v1h-1zM41 19h1v1h-1zM103 19h1v5h-1zM9 20h1v2h-1zM42 20h1v2h-1zM52 20h1v13h-1zM8 22h1v10h-1zM43 22h1v10h-1zM104 24h1v6h-1zM103 30h1v5h-1zM9 32h1v2h-1zM42 32h1v2h-1zM53 33h1v3h-1zM10 34h1v1h-1zM41 34h1v1h-1zM11 35h1v2h-1zM40 35h1v2h-1zM102 35h1v2h-1zM54 36h1v3h-1zM12 37h1v2h-1zM39 37h1v2h-1zM101 37h1v2h-1zM13 39h1v1h-1zM38 39h1v1h-1zM55 39h1v1h-1zM100 39h1v2h-1zM14 40h2v1h-2zM36 40h2v1h-2zM56 40h1v2h-1zM16 41h2v1h-2zM34 41h2v1h-2zM99 41h1v1h-1zM18 42h1v1h-1zM33 42h1v1h-1zM57 42h1v1h-1zM98 42h1v2h-1zM19 43h2v1h-2zM31 43h2v1h-2zM58 43h1v1h-1zM21 44h10v1h-10zM59 44h1v1h-1zM97 44h1v1h-1zM60 45h1v1h-1zM96 45h1v1h-1zM61 46h1v1h-1zM95 46h1v1h-1zM62 47h1v1h-1zM93 47h2v1h-2zM63 48h2v1h-2zM92 48h1v1h-1zM65 49h1v1h-1zM90 49h2v1h-2zM66 50h3v1h-3zM88 50h2v1h-2zM69 51h3v1h-3zM85 51h3v1h-3zM72 52h13v1h-13zM21 58h9v1h-9zM19 59h2v1h-2zM30 59h4v1h-4zM17 60h2v1h-2zM34 60h2v1h-2zM14 61h3v1h-3zM36 61h1v1h-1zM12 62h2v1h-2zM37 62h2v1h-2zM12 63h1v1h-1zM39 63h1v1h-1zM11 64h1v1h-1zM40 64h1v1h-1zM10 65h1v1h-1zM41 65h2v1h-2zM9 66h1v2h-1zM42 66h1v1h-1zM127 66h6v1h-6zM43 67h1v3h-1zM124 67h3v1h-3zM133 67h3v1h-3zM8 68h1v1h-1zM123 68h1v1h-1zM136 68h1v1h-1zM7 69h1v2h-1zM121 69h2v1h-2zM137 69h2v1h-2zM44 70h1v2h-1zM120 70h1v2h-1zM139 70h1v1h-1zM6 71h1v4h-1zM140 71h1v2h-1zM45 72h1v2h-1zM119 72h1v1h-1zM118 73h1v3h-1zM141 73h1v2h-1zM46 74h1v9h-1zM5 75h1v9h-1zM142 75h1v8h-1zM117 76h1v6h-1zM118 82h1v3h-1zM45 83h1v4h-1zM141 83h1v2h-1zM6 84h1v2h-1zM119 85h1v1h-1zM140 85h1v2h-1zM7 86h1v2h-1zM120 86h1v2h-1zM44 87h1v2h-1zM139 87h1v1h-1zM8 88h1v3h-1zM121 88h1v1h-1zM138 88h1v1h-1zM43 89h1v1h-1zM122 89h2v1h-2zM136 89h2v1h-2zM42 90h1v2h-1zM124 90h2v1h-2zM134 90h2v1h-2zM9 91h1v2h-1zM126 91h8v1h-8zM10 92h1v1h-1zM41 92h1v1h-1zM11 93h1v1h-1zM40 93h1v1h-1zM12 94h1v1h-1zM39 94h1v2h-1zM13 95h2v1h-2zM38 95h1v1h-1zM15 96h1v1h-1zM35 96h3v1h-3zM16 97h2v1h-2zM33 97h2v1h-2zM18 98h4v1h-4zM31 98h2v1h-2zM22 99h9v1h-9zM77 128h2v1h-2zM76 129h1v1h-1zM79 129h1v1h-1zM75 130h1v2h-1zM80 130h1v2h-1zM76 132h1v1h-1zM79 132h1v1h-1zM77 133h2v1h-2zM516 244h20v1h-20zM73 322h10v1h-10zM71 323h2v1h-2zM83 323h2v1h-2zM69 324h2v1h-2zM85 324h2v1h-2zM68 325h1v1h-1zM87 325h1v1h-1zM65 326h3v1h-3zM88 326h3v1h-3zM65 327h1v2h-1zM90 327h1v2h-1zM64 329h1v1h-1zM91 329h1v1h-1zM63 330h1v2h-1zM92 330h1v2h-1zM62 332h1v2h-1zM93 332h1v2h-1zM61 334h1v10h-1zM94 334h1v10h-1zM516 339h1v1h-1zM62 344h1v2h-1zM93 344h1v2h-1zM63 346h1v2h-1zM92 346h1v2h-1zM64 348h1v1h-1zM91 348h1v1h-1zM65 349h1v3h-1zM90 349h1v3h-1zM66 351h2v1h-2zM88 351h2v1h-2zM68 352h1v1h-1zM87 352h1v1h-1zM69 353h2v1h-2zM85 353h2v1h-2zM71 354h2v1h-2zM83 354h2v1h-2zM73 355h10v1h-10zM73 372h10v1h-10zM71 373h2v1h-2zM83 373h2v1h-2zM69 374h2v1h-2zM85 374h2v1h-2zM68 375h1v1h-1zM87 375h1v1h-1zM66 376h2v1h-2zM88 376h2v1h-2zM64 377h2v1h-2zM90 377h2v1h-2zM64 378h1v1h-1zM91 378h1v1h-1zM63 379h1v2h-1zM92 379h1v2h-1zM62 381h1v1h-1zM93 381h1v1h-1zM61 382h1v2h-1zM94 382h1v2h-1zM60 384h1v2h-1zM95 384h1v2h-1zM59 386h1v10h-1zM96 386h1v10h-1zM25 390h2v2h-2zM60 396h1v2h-1zM95 396h1v2h-1zM61 398h1v2h-1zM94 398h1v2h-1zM62 400h1v1h-1zM93 400h1v1h-1zM63 401h1v2h-1zM92 401h1v2h-1zM64 403h1v2h-1zM91 403h1v2h-1zM65 404h1v1h-1zM90 404h1v1h-1zM66 405h2v1h-2zM88 405h2v1h-2zM68 406h1v1h-1zM87 406h1v1h-1zM69 407h2v1h-2zM85 407h2v1h-2zM71 408h2v1h-2zM83 408h2v1h-2zM73 409h10v1h-10zM436 419h1v1h-1zM596 419h1v1h-1zM10 477h1v2h-1zM94 477h1v1h-1zM123 477h1v2h-1zM157 477h1v3h-1zM227 477h1v2h-1zM232 477h1v2h-1zM247 477h1v3h-1zM349 477h1v2h-1zM401 477h1v2h-1zM11 478h1v1h-1zM46 478h1v2h-1zM58 478h1v1h-1zM93 478h1v2h-1zM95 478h1v2h-1zM124 478h1v2h-1zM156 478h1v1h-1zM167 478h1v2h-1zM184 478h1v1h-1zM246 478h1v1h-1zM266 478h2v1h-2zM310 478h2v1h-2zM350 478h1v2h-1zM9 479h1v3h-1zM12 479h1v7h-1zM57 479h1v2h-1zM59 479h1v2h-1zM74 479h2v1h-2zM83 479h1v1h-1zM87 479h1v1h-1zM99 479h1v1h-1zM102 479h1v1h-1zM113 479h1v3h-1zM122 479h1v3h-1zM155 479h1v1h-1zM166 479h1v2h-1zM182 479h2v1h-2zM185 479h2v1h-2zM213 479h1v2h-1zM226 479h1v3h-1zM228 479h1v3h-1zM231 479h1v4h-1zM233 479h1v2h-1zM245 479h1v2h-1zM263 479h3v1h-3zM268 479h1v1h-1zM290 479h1v1h-1zM308 479h2v1h-2zM312 479h2v1h-2zM338 479h2v1h-2zM348 479h1v4h-1zM359 479h1v1h-1zM370 479h1v2h-1zM393 479h1v2h-1zM400 479h1v2h-1zM402 479h1v2h-1zM412 479h1v2h-1zM45 480h1v2h-1zM47 480h1v2h-1zM65 480h1v1h-1zM69 480h5v1h-5zM75 480h1v1h-1zM82 480h1v2h-1zM84 480h3v1h-3zM88 480h1v2h-1zM92 480h1v1h-1zM96 480h1v1h-1zM98 480h1v1h-1zM100 480h2v1h-2zM103 480h1v1h-1zM111 480h2v1h-2zM125 480h1v1h-1zM127 480h2v1h-2zM135 480h2v1h-2zM142 480h1v1h-1zM148 480h1v2h-1zM154 480h1v2h-1zM158 480h1v3h-1zM161 480h1v2h-1zM168 480h1v3h-1zM173 480h2v1h-2zM181 480h1v1h-1zM187 480h1v2h-1zM198 480h1v2h-1zM214 480h1v2h-1zM248 480h1v4h-1zM263 480h1v1h-1zM269 480h1v3h-1zM286 480h1v2h-1zM289 480h1v2h-1zM291 480h1v2h-1zM306 480h2v1h-2zM314 480h2v1h-2zM329 480h1v1h-1zM337 480h1v2h-1zM340 480h2v1h-2zM351 480h1v1h-1zM357 480h2v1h-2zM360 480h2v1h-2zM368 480h2v1h-2zM394 480h1v2h-1zM397 480h1v2h-1zM411 480h1v2h-1zM29 481h3v1h-3zM41 481h2v1h-2zM56 481h1v2h-1zM60 481h1v2h-1zM64 481h1v2h-1zM66 481h1v1h-1zM68 481h1v1h-1zM76 481h1v4h-1zM79 481h1v2h-1zM86 481h1v1h-1zM91 481h1v2h-1zM97 481h1v1h-1zM101 481h1v1h-1zM104 481h1v1h-1zM107 481h1v1h-1zM110 481h1v2h-1zM126 481h1v1h-1zM129 481h2v1h-2zM133 481h2v1h-2zM137 481h2v1h-2zM141 481h1v2h-1zM143 481h1v1h-1zM147 481h1v1h-1zM159 481h2v1h-2zM165 481h1v1h-1zM173 481h1v1h-1zM175 481h6v1h-6zM191 481h1v1h-1zM197 481h1v2h-1zM212 481h1v3h-1zM234 481h1v2h-1zM241 481h4v1h-4zM251 481h2v1h-2zM262 481h1v2h-1zM282 481h1v2h-1zM287 481h1v2h-1zM305 481h1v1h-1zM316 481h5v1h-5zM328 481h1v2h-1zM330 481h1v2h-1zM342 481h1v1h-1zM352 481h2v1h-2zM356 481h1v1h-1zM362 481h1v1h-1zM367 481h1v1h-1zM371 481h1v2h-1zM392 481h1v3h-1zM398 481h2v1h-2zM403 481h1v2h-1zM413 481h1v2h-1zM8 482h1v6h-1zM27 482h2v1h-2zM32 482h4v1h-4zM39 482h2v1h-2zM42 482h1v2h-1zM44 482h1v2h-1zM48 482h1v2h-1zM52 482h1v1h-1zM67 482h1v1h-1zM80 482h2v1h-2zM89 482h1v1h-1zM105 482h2v1h-2zM108 482h1v1h-1zM114 482h1v3h-1zM120 482h2v1h-2zM130 482h1v1h-1zM132 482h1v2h-1zM139 482h1v1h-1zM144 482h1v1h-1zM146 482h1v1h-1zM149 482h1v3h-1zM153 482h1v3h-1zM162 482h1v2h-1zM164 482h1v2h-1zM172 482h1v4h-1zM188 482h1v2h-1zM190 482h1v2h-1zM192 482h1v1h-1zM199 482h1v2h-1zM209 482h1v1h-1zM215 482h1v1h-1zM220 482h1v1h-1zM225 482h1v2h-1zM229 482h1v2h-1zM240 482h1v2h-1zM251 482h1v1h-1zM253 482h2v1h-2zM281 482h1v2h-1zM285 482h1v2h-1zM288 482h1v2h-1zM292 482h1v1h-1zM295 482h1v1h-1zM304 482h1v1h-1zM321 482h1v2h-1zM336 482h1v2h-1zM343 482h1v1h-1zM354 482h2v1h-2zM363 482h1v1h-1zM366 482h1v2h-1zM395 482h2v2h-2zM399 482h1v1h-1zM410 482h1v2h-1zM414 482h2v1h-2zM27 483h1v8h-1zM36 483h3v1h-3zM50 483h2v1h-2zM53 483h3v1h-3zM61 483h1v2h-1zM63 483h1v2h-1zM78 483h1v2h-1zM81 483h1v1h-1zM90 483h1v1h-1zM109 483h1v1h-1zM119 483h1v1h-1zM131 483h1v2h-1zM140 483h1v1h-1zM145 483h1v1h-1zM169 483h1v2h-1zM193 483h1v1h-1zM196 483h1v2h-1zM202 483h2v1h-2zM208 483h1v1h-1zM210 483h1v2h-1zM216 483h1v1h-1zM219 483h1v2h-1zM221 483h1v1h-1zM230 483h1v3h-1zM235 483h1v3h-1zM250 483h1v2h-1zM255 483h1v1h-1zM261 483h1v2h-1zM270 483h1v4h-1zM283 483h1v2h-1zM293 483h2v1h-2zM296 483h2v1h-2zM303 483h1v2h-1zM327 483h1v2h-1zM331 483h1v1h-1zM344 483h2v1h-2zM347 483h1v2h-1zM364 483h1v1h-1zM372 483h1v2h-1zM385 483h1v2h-1zM404 483h1v1h-1zM408 483h2v1h-2zM43 484h1v2h-1zM49 484h1v1h-1zM55 484h1v1h-1zM115 484h1v1h-1zM118 484h1v1h-1zM163 484h1v1h-1zM189 484h1v1h-1zM194 484h1v1h-1zM200 484h2v1h-2zM204 484h1v1h-1zM207 484h1v2h-1zM211 484h1v2h-1zM217 484h1v1h-1zM222 484h1v1h-1zM224 484h1v1h-1zM239 484h1v2h-1zM249 484h1v3h-1zM256 484h1v1h-1zM274 484h4v1h-4zM279 484h2v1h-2zM284 484h1v2h-1zM298 484h4v1h-4zM322 484h1v1h-1zM332 484h1v2h-1zM335 484h1v1h-1zM346 484h1v1h-1zM365 484h1v1h-1zM375 484h10v1h-10zM391 484h1v2h-1zM396 484h1v1h-1zM405 484h1v2h-1zM407 484h1v2h-1zM62 485h1v1h-1zM77 485h1v2h-1zM116 485h2v1h-2zM150 485h3v1h-3zM170 485h1v2h-1zM195 485h1v1h-1zM200 485h1v1h-1zM205 485h1v1h-1zM218 485h1v1h-1zM223 485h1v1h-1zM257 485h1v1h-1zM259 485h2v1h-2zM273 485h1v1h-1zM278 485h1v1h-1zM302 485h1v1h-1zM323 485h1v1h-1zM326 485h1v2h-1zM334 485h1v1h-1zM373 485h2v1h-2zM386 485h1v2h-1zM19 486h1v2h-1zM150 486h1v1h-1zM171 486h1v2h-1zM206 486h1v1h-1zM236 486h1v3h-1zM238 486h1v3h-1zM258 486h1v1h-1zM272 486h1v2h-1zM324 486h1v1h-1zM333 486h1v1h-1zM373 486h1v1h-1zM390 486h1v2h-1zM406 486h1v1h-1zM13 487h1v2h-1zM18 487h1v2h-1zM271 487h1v2h-1zM325 487h1v1h-1zM387 487h1v2h-1zM7 488h1v7h-1zM20 488h1v3h-1zM388 488h2v1h-2zM17 489h1v3h-1zM237 489h1v2h-1zM13 490h1v5h-1zM21 491h1v3h-1zM26 491h1v9h-1zM16 492h1v4h-1zM22 494h1v3h-1zM6 495h1v15h-1zM14 495h1v2h-1zM15 496h1v3h-1zM23 497h1v2h-1zM24 498h1v1h-1zM25 499h1v1h-1zM516 499h1v1h-1zM5 513h1v3h-1zM5 519h1v18h-1zM4 537h1v9h-1zM2 546h2v1h-2zM2 547h1v11h-1zM1 558h1v12h-1z"/>
<path fill="#005000" d="M75 1h6v1h-6zM70 2h16v1h-16zM68 3h21v1h-21zM66 4h25v1h-25zM64 5h28v1h-28zM63 6h31v1h-31zM61 7h34v1h-34zM60 8h36v1h-36zM59 9h38v1h-38zM21 10h10v1h-10zM58 10h40v1h-40zM19 11h14v1h-14zM58 11h41v1h-41zM18 12h16v1h-16zM57 12h42v1h-42zM16 13h20v1h-20zM56 13h44v1h-44zM14 14h24v1h-24zM56 14h45v1h-45zM13 15h26v2h-26zM55 15h46v1h-46zM55 16h47v1h-47zM12 17h28v2h-28zM54 17h48v2h-48zM11 19h30v1h-30zM54 19h49v1h-49zM10 20h32v2h-32zM53 20h50v4h-50zM9 22h34v10h-34zM53 24h51v6h-51zM53 30h50v3h-50zM10 32h32v2h-32zM54 33h49v2h-49zM11 34h30v1h-30zM12 35h28v2h-28zM54 35h48v1h-48zM55 36h47v1h-47zM13 37h26v2h-26zM55 37h46v2h-46zM14 39h24v1h-24zM56 39h44v1h-44zM16 40h20v1h-20zM57 40h43v1h-43zM18 41h16v1h-16zM57 41h42v1h-42zM19 42h14v1h-14zM58 42h40v1h-40zM21 43h10v1h-10zM59 43h39v1h-39zM60 44h37v1h-37zM61 45h35v1h-35zM62 46h33v1h-33zM63 47h30v1h-30zM65 48h27v1h-27zM66 49h24v1h-24zM69 50h19v1h-19zM72 51h13v1h-13zM21 59h9v1h-9zM19 60h15v1h-15zM17 61h19v1h-19zM14 62h23v1h-23zM13 63h26v1h-26zM12 64h28v1h-28zM11 65h30v1h-30zM10 66h32v1h-32zM10 67h33v1h-33zM127 67h6v1h-6zM9 68h34v1h-34zM124 68h12v1h-12zM8 69h35v1h-35zM123 69h14v1h-14zM8 70h36v1h-36zM121 70h18v1h-18zM7 71h37v1h-37zM121 71h19v1h-19zM7 72h38v2h-38zM120 72h20v1h-20zM119 73h22v2h-22zM7 74h39v1h-39zM6 75h40v8h-40zM119 75h23v1h-23zM118 76h24v6h-24zM119 82h23v1h-23zM6 83h39v1h-39zM119 83h22v2h-22zM7 84h38v2h-38zM120 85h20v1h-20zM8 86h37v1h-37zM121 86h19v1h-19zM8 87h36v1h-36zM121 87h18v1h-18zM9 88h35v1h-35zM122 88h16v1h-16zM9 89h34v1h-34zM124 89h12v1h-12zM9 90h33v1h-33zM126 90h8v1h-8zM10 91h32v1h-32zM11 92h30v1h-30zM12 93h28v1h-28zM13 94h26v1h-26zM15 95h23v1h-23zM16 96h19v1h-19zM18 97h15v1h-15zM22 98h9v1h-9zM77 129h2v1h-2zM76 130h4v2h-4zM77 132h2v1h-2zM73 323h10v1h-10zM71 324h14v1h-14zM69 325h18v1h-18zM68 326h20v1h-20zM66 327h24v2h-24zM65 329h26v1h-26zM64 330h28v2h-28zM63 332h30v2h-30zM62 334h32v10h-32zM63 344h30v2h-30zM64 346h28v2h-28zM65 348h26v1h-26zM66 349h24v2h-24zM68 351h20v1h-20zM69 352h18v1h-18zM71 353h14v1h-14zM73 354h10v1h-10zM73 373h10v1h-10zM71 374h14v1h-14zM69 375h18v1h-18zM68 376h20v1h-20zM66 377h24v1h-24zM65 378h26v1h-26zM64 379h28v2h-28zM63 381h30v1h-30zM62 382h32v2h-32zM61 384h34v2h-34zM60 386h36v10h-36zM61 396h34v2h-34zM62 398h32v2h-32zM63 400h30v1h-30zM64 401h28v2h-28zM65 403h26v1h-26zM66 404h24v1h-24zM68 405h20v1h-20zM69 406h18v1h-18zM71 407h14v1h-14zM73 408h10v1h-10z"/>
<path fill="#0000ff" d="M128 8h4v1h-4zM124 9h4v1h-4zM132 9h4v1h-4zM120 10h4v1h-4zM136 10h4v1h-4zM120 11h1v1h-1zM139 11h1v1h-1zM119 12h1v1h-1zM140 12h1v1h-1zM282 12h8v1h-8zM334 12h8v1h-8zM118 13h1v1h-1zM141 13h1v1h-1zM280 13h2v1h-2zM290 13h2v1h-2zM332 13h2v1h-2zM342 13h2v1h-2zM117 14h1v1h-1zM142 14h1v1h-1zM278 14h2v1h-2zM292 14h2v1h-2zM330 14h2v1h-2zM344 14h2v1h-2zM116 15h1v1h-1zM143 15h1v1h-1zM276 15h2v1h-2zM294 15h2v1h-2zM329 15h1v1h-1zM346 15h1v1h-1zM115 16h1v1h-1zM144 16h1v1h-1zM275 16h1v1h-1zM296 16h1v1h-1zM327 16h2v1h-2zM347 16h2v1h-2zM113 17h2v1h-2zM145 17h2v1h-2zM274 17h1v2h-1zM297 17h1v2h-1zM327 17h1v1h-1zM348 17h1v1h-1zM113 18h1v3h-1zM146 18h1v3h-1zM326 18h1v1h-1zM349 18h1v1h-1zM273 19h1v2h-1zM298 19h1v2h-1zM325 19h1v2h-1zM350 19h1v2h-1zM112 21h1v4h-1zM147 21h1v4h-1zM272 21h1v2h-1zM299 21h1v2h-1zM324 21h1v2h-1zM351 21h1v2h-1zM271 23h1v8h-1zM300 23h1v8h-1zM323 23h1v8h-1zM352 23h1v8h-1zM111 25h1v4h-1zM148 25h1v4h-1zM389 26h2v2h-2zM112 29h1v4h-1zM147 29h1v4h-1zM272 31h1v2h-1zM299 31h1v2h-1zM324 31h1v2h-1zM351 31h1v2h-1zM113 33h1v4h-1zM146 33h1v4h-1zM273 33h1v2h-1zM298 33h1v2h-1zM325 33h1v2h-1zM350 33h1v2h-1zM274 35h1v2h-1zM297 35h1v2h-1zM326 35h1v1h-1zM349 35h1v1h-1zM114 36h1v1h-1zM145 36h1v1h-1zM327 36h1v2h-1zM348 36h1v2h-1zM115 37h1v1h-1zM144 37h1v1h-1zM275 37h1v1h-1zM296 37h1v1h-1zM328 37h1v1h-1zM347 37h1v1h-1zM116 38h1v1h-1zM143 38h1v1h-1zM276 38h2v1h-2zM294 38h2v1h-2zM329 38h1v1h-1zM346 38h1v1h-1zM117 39h1v1h-1zM142 39h1v1h-1zM278 39h2v1h-2zM292 39h2v1h-2zM330 39h2v1h-2zM344 39h2v1h-2zM118 40h1v1h-1zM141 40h1v1h-1zM280 40h2v1h-2zM290 40h2v1h-2zM332 40h2v1h-2zM342 40h2v1h-2zM119 41h1v1h-1zM140 41h1v1h-1zM282 41h8v1h-8zM334 41h8v1h-8zM120 42h1v2h-1zM139 42h1v2h-1zM121 43h3v1h-3zM136 43h3v1h-3zM124 44h4v1h-4zM132 44h4v1h-4zM128 45h4v1h-4zM387 74h6v1h-6zM285 75h2v1h-2zM386 75h1v1h-1zM393 75h1v1h-1zM283 76h2v1h-2zM287 76h2v1h-2zM385 76h1v6h-1zM394 76h1v6h-1zM283 77h1v1h-1zM288 77h1v1h-1zM282 78h1v2h-1zM289 78h1v2h-1zM337 78h2v2h-2zM283 80h1v2h-1zM288 80h1v2h-1zM284 81h1v1h-1zM287 81h1v1h-1zM285 82h2v1h-2zM386 82h1v1h-1zM393 82h1v1h-1zM387 83h6v1h-6zM335 120h6v1h-6zM333 121h2v1h-2zM341 121h2v1h-2zM331 122h2v1h-2zM343 122h2v1h-2zM330 123h1v1h-1zM345 123h1v1h-1zM329 124h1v2h-1zM346 124h1v2h-1zM129 125h2v1h-2zM127 126h2v1h-2zM131 126h2v1h-2zM328 126h1v2h-1zM347 126h1v2h-1zM126 127h1v1h-1zM133 127h1v1h-1zM125 128h1v2h-1zM134 128h1v2h-1zM327 128h1v6h-1zM348 128h1v6h-1zM284 129h4v1h-4zM124 130h1v2h-1zM135 130h1v2h-1zM284 130h1v3h-1zM287 130h1v3h-1zM125 132h1v2h-1zM134 132h1v2h-1zM285 132h2v1h-2zM126 134h1v1h-1zM133 134h1v1h-1zM328 134h1v2h-1zM347 134h1v2h-1zM127 135h2v1h-2zM131 135h2v1h-2zM129 136h2v1h-2zM329 136h1v2h-1zM346 136h1v2h-1zM330 138h1v1h-1zM345 138h1v1h-1zM331 139h2v1h-2zM343 139h2v1h-2zM333 140h2v1h-2zM341 140h2v1h-2zM335 141h6v1h-6zM388 161h4v1h-4zM384 162h4v1h-4zM392 162h4v1h-4zM380 163h4v1h-4zM396 163h4v1h-4zM378 164h2v1h-2zM400 164h2v1h-2zM377 165h1v1h-1zM402 165h1v1h-1zM376 166h1v1h-1zM403 166h1v1h-1zM375 167h1v1h-1zM404 167h1v1h-1zM374 168h1v1h-1zM405 168h1v1h-1zM373 169h1v1h-1zM406 169h1v1h-1zM372 170h1v1h-1zM407 170h1v1h-1zM371 171h1v2h-1zM408 171h1v2h-1zM370 173h1v4h-1zM409 173h1v4h-1zM369 177h1v4h-1zM410 177h1v4h-1zM181 180h2v1h-2zM129 181h2v1h-2zM180 181h1v1h-1zM183 181h1v1h-1zM368 181h1v4h-1zM411 181h1v4h-1zM128 182h4v2h-4zM179 182h1v2h-1zM184 182h1v2h-1zM129 184h2v1h-2zM180 184h1v1h-1zM183 184h1v1h-1zM181 185h2v1h-2zM369 185h1v4h-1zM410 185h1v4h-1zM370 189h1v4h-1zM409 189h1v4h-1zM371 193h1v2h-1zM408 193h1v2h-1zM372 195h1v1h-1zM407 195h1v1h-1zM373 196h1v1h-1zM406 196h1v1h-1zM374 197h1v1h-1zM405 197h1v1h-1zM375 198h1v1h-1zM404 198h1v1h-1zM376 199h1v1h-1zM403 199h1v1h-1zM377 200h1v1h-1zM402 200h1v1h-1zM378 201h2v1h-2zM400 201h2v1h-2zM380 202h4v1h-4zM396 202h4v1h-4zM384 203h4v1h-4zM392 203h4v1h-4zM388 204h4v1h-4zM332 218h12v1h-12zM385 218h10v1h-10zM331 219h1v1h-1zM344 219h1v1h-1zM383 219h2v1h-2zM395 219h2v1h-2zM456 219h20v1h-20zM329 220h2v1h-2zM345 220h2v1h-2zM382 220h1v1h-1zM397 220h1v1h-1zM126 221h8v1h-8zM327 221h2v1h-2zM347 221h2v1h-2zM380 221h2v1h-2zM398 221h2v1h-2zM124 222h2v1h-2zM134 222h2v1h-2zM325 222h2v1h-2zM349 222h2v1h-2zM378 222h2v1h-2zM400 222h2v1h-2zM122 223h2v1h-2zM136 223h2v1h-2zM325 223h1v1h-1zM350 223h1v1h-1zM377 223h1v2h-1zM402 223h1v2h-1zM121 224h1v1h-1zM138 224h1v1h-1zM324 224h1v2h-1zM351 224h1v2h-1zM120 225h1v1h-1zM139 225h1v1h-1zM376 225h1v2h-1zM403 225h1v2h-1zM119 226h1v1h-1zM140 226h1v1h-1zM323 226h1v2h-1zM352 226h1v2h-1zM118 227h1v2h-1zM141 227h1v2h-1zM375 227h1v1h-1zM404 227h1v1h-1zM322 228h1v1h-1zM353 228h1v1h-1zM374 228h1v2h-1zM405 228h1v2h-1zM117 229h1v2h-1zM142 229h1v2h-1zM321 229h1v12h-1zM354 229h1v12h-1zM373 230h1v10h-1zM406 230h1v10h-1zM116 231h1v8h-1zM143 231h1v8h-1zM181 234h2v2h-2zM117 239h1v2h-1zM142 239h1v2h-1zM374 240h1v2h-1zM405 240h1v2h-1zM118 241h1v2h-1zM141 241h1v2h-1zM322 241h1v1h-1zM353 241h1v1h-1zM323 242h1v2h-1zM352 242h1v2h-1zM375 242h1v1h-1zM404 242h1v1h-1zM119 243h1v1h-1zM140 243h1v1h-1zM376 243h1v2h-1zM403 243h1v2h-1zM120 244h1v1h-1zM139 244h1v1h-1zM324 244h1v2h-1zM351 244h1v2h-1zM121 245h1v1h-1zM138 245h1v1h-1zM377 245h1v2h-1zM402 245h1v2h-1zM122 246h2v1h-2zM136 246h2v1h-2zM325 246h1v2h-1zM350 246h1v2h-1zM124 247h2v1h-2zM134 247h2v1h-2zM326 247h1v1h-1zM349 247h1v1h-1zM378 247h2v1h-2zM400 247h2v1h-2zM126 248h8v1h-8zM327 248h2v1h-2zM347 248h2v1h-2zM380 248h2v1h-2zM398 248h2v1h-2zM329 249h2v1h-2zM345 249h2v1h-2zM382 249h1v1h-1zM397 249h1v1h-1zM331 250h1v1h-1zM344 250h1v1h-1zM383 250h2v1h-2zM395 250h2v1h-2zM332 251h12v1h-12zM385 251h10v1h-10zM125 271h10v1h-10zM123 272h2v1h-2zM135 272h2v1h-2zM122 273h1v1h-1zM137 273h1v1h-1zM120 274h2v1h-2zM138 274h2v1h-2zM118 275h2v1h-2zM140 275h2v1h-2zM118 276h1v1h-1zM141 276h1v1h-1zM117 277h1v2h-1zM142 277h1v2h-1zM116 279h1v1h-1zM143 279h1v1h-1zM115 280h1v2h-1zM144 280h1v2h-1zM114 282h1v10h-1zM145 282h1v10h-1zM337 285h2v1h-2zM336 286h4v2h-4zM337 288h2v1h-2zM115 292h1v2h-1zM144 292h1v2h-1zM116 294h1v1h-1zM143 294h1v1h-1zM117 295h1v2h-1zM142 295h1v2h-1zM118 297h1v2h-1zM141 297h1v2h-1zM119 298h1v1h-1zM140 298h1v1h-1zM120 299h2v1h-2zM138 299h2v1h-2zM122 300h1v1h-1zM137 300h1v1h-1zM123 301h2v1h-2zM135 301h2v1h-2zM471 301h2v1h-2zM125 302h10v1h-10zM470 302h1v8h-1zM473 302h1v1h-1zM459 304h2v1h-2zM462 304h1v1h-1zM459 305h1v5h-1zM461 305h1v4h-1zM463 305h1v5h-1zM469 305h1v1h-1zM471 305h2v1h-2zM456 339h1v1h-1zM436 359h1v1h-1zM596 359h1v1h-1zM8 488h2v1h-2zM8 489h1v6h-1zM10 489h1v2h-1zM11 491h1v2h-1zM12 493h1v3h-1zM19 493h1v4h-1zM7 495h1v23h-1zM20 495h1v4h-1zM349 495h1v2h-1zM13 496h1v3h-1zM18 497h1v7h-1zM291 497h1v2h-1zM295 497h1v2h-1zM341 497h1v4h-1zM348 497h1v4h-1zM350 497h1v4h-1zM385 497h1v2h-1zM45 498h1v2h-1zM246 498h1v2h-1zM296 498h1v2h-1zM14 499h1v2h-1zM21 499h1v4h-1zM27 499h1v2h-1zM46 499h1v2h-1zM75 499h1v2h-1zM113 499h2v1h-2zM123 499h1v2h-1zM155 499h1v2h-1zM213 499h1v2h-1zM227 499h1v2h-1zM245 499h1v2h-1zM290 499h1v4h-1zM292 499h1v3h-1zM294 499h1v3h-1zM307 499h1v1h-1zM329 499h1v1h-1zM340 499h1v2h-1zM366 499h2v1h-2zM384 499h1v3h-1zM386 499h1v2h-1zM391 499h1v2h-1zM401 499h1v1h-1zM456 499h1v1h-1zM28 500h1v1h-1zM44 500h1v4h-1zM74 500h1v2h-1zM88 500h1v1h-1zM94 500h1v1h-1zM100 500h1v1h-1zM112 500h1v2h-1zM115 500h2v1h-2zM124 500h1v2h-1zM130 500h1v1h-1zM149 500h1v3h-1zM156 500h1v1h-1zM159 500h1v1h-1zM182 500h2v1h-2zM186 500h3v1h-3zM193 500h1v1h-1zM201 500h1v1h-1zM209 500h1v2h-1zM228 500h2v1h-2zM232 500h1v1h-1zM247 500h1v2h-1zM271 500h1v2h-1zM297 500h1v1h-1zM306 500h1v2h-1zM308 500h1v1h-1zM314 500h1v1h-1zM318 500h1v1h-1zM328 500h1v2h-1zM330 500h1v1h-1zM336 500h2v1h-2zM358 500h3v1h-3zM365 500h1v2h-1zM368 500h2v1h-2zM390 500h1v1h-1zM397 500h4v1h-4zM402 500h1v2h-1zM15 501h1v3h-1zM26 501h1v3h-1zM29 501h1v1h-1zM47 501h1v2h-1zM57 501h2v1h-2zM76 501h1v2h-1zM83 501h2v1h-2zM87 501h1v1h-1zM89 501h1v2h-1zM92 501h2v1h-2zM95 501h2v1h-2zM98 501h2v1h-2zM101 501h1v2h-1zM117 501h1v1h-1zM122 501h1v3h-1zM129 501h1v2h-1zM131 501h1v2h-1zM142 501h1v1h-1zM154 501h1v2h-1zM157 501h2v1h-2zM160 501h1v2h-1zM166 501h4v1h-4zM181 501h1v2h-1zM184 501h2v1h-2zM189 501h2v1h-2zM192 501h1v1h-1zM194 501h1v2h-1zM200 501h1v1h-1zM202 501h2v1h-2zM208 501h1v2h-1zM212 501h1v2h-1zM214 501h1v2h-1zM220 501h1v1h-1zM226 501h1v3h-1zM230 501h2v1h-2zM233 501h1v1h-1zM241 501h2v1h-2zM244 501h1v2h-1zM251 501h1v1h-1zM266 501h5v1h-5zM298 501h1v2h-1zM309 501h1v1h-1zM312 501h2v1h-2zM315 501h1v1h-1zM317 501h1v1h-1zM319 501h1v2h-1zM331 501h5v1h-5zM337 501h1v2h-1zM339 501h1v2h-1zM342 501h1v4h-1zM347 501h1v2h-1zM351 501h1v2h-1zM356 501h2v1h-2zM361 501h2v1h-2zM370 501h1v2h-1zM381 501h1v1h-1zM387 501h3v1h-3zM392 501h1v2h-1zM397 501h1v1h-1zM407 501h1v1h-1zM30 502h1v2h-1zM42 502h1v3h-1zM56 502h1v2h-1zM59 502h2v1h-2zM73 502h1v2h-1zM83 502h1v1h-1zM85 502h2v1h-2zM91 502h1v1h-1zM97 502h1v1h-1zM111 502h1v2h-1zM118 502h1v2h-1zM125 502h1v1h-1zM134 502h3v1h-3zM141 502h1v2h-1zM143 502h1v2h-1zM148 502h1v2h-1zM166 502h1v1h-1zM169 502h1v1h-1zM174 502h1v2h-1zM191 502h1v1h-1zM199 502h1v1h-1zM204 502h1v1h-1zM210 502h1v2h-1zM219 502h1v1h-1zM221 502h1v1h-1zM234 502h1v1h-1zM240 502h1v1h-1zM243 502h1v1h-1zM248 502h1v2h-1zM250 502h1v2h-1zM252 502h1v1h-1zM264 502h2v1h-2zM272 502h1v2h-1zM293 502h1v2h-1zM305 502h1v2h-1zM310 502h2v1h-2zM316 502h1v1h-1zM327 502h1v2h-1zM352 502h1v1h-1zM355 502h1v1h-1zM363 502h2v1h-2zM380 502h1v2h-1zM382 502h2v1h-2zM396 502h1v3h-1zM403 502h2v1h-2zM406 502h1v1h-1zM408 502h1v2h-1zM22 503h1v3h-1zM40 503h2v1h-2zM48 503h1v2h-1zM60 503h1v1h-1zM65 503h1v1h-1zM68 503h2v1h-2zM72 503h1v1h-1zM77 503h1v2h-1zM82 503h1v3h-1zM90 503h1v1h-1zM102 503h1v1h-1zM107 503h2v1h-2zM121 503h1v1h-1zM126 503h3v1h-3zM132 503h2v1h-2zM137 503h3v1h-3zM150 503h1v2h-1zM153 503h1v2h-1zM161 503h1v2h-1zM165 503h1v4h-1zM170 503h1v2h-1zM175 503h1v1h-1zM180 503h1v2h-1zM195 503h1v1h-1zM198 503h1v1h-1zM205 503h1v2h-1zM207 503h1v2h-1zM211 503h1v2h-1zM215 503h4v1h-4zM222 503h1v1h-1zM235 503h1v2h-1zM239 503h1v1h-1zM253 503h2v1h-2zM263 503h1v1h-1zM286 503h1v1h-1zM289 503h1v3h-1zM299 503h1v1h-1zM320 503h1v1h-1zM326 503h1v1h-1zM338 503h1v2h-1zM346 503h1v1h-1zM353 503h2v1h-2zM364 503h1v1h-1zM371 503h1v2h-1zM383 503h1v1h-1zM393 503h2v1h-2zM405 503h1v1h-1zM411 503h5v1h-5zM16 504h2v2h-2zM25 504h1v4h-1zM31 504h1v2h-1zM38 504h2v1h-2zM43 504h1v3h-1zM55 504h1v1h-1zM61 504h1v2h-1zM64 504h1v1h-1zM66 504h2v1h-2zM70 504h2v1h-2zM78 504h1v1h-1zM103 504h2v1h-2zM106 504h1v1h-1zM109 504h2v1h-2zM119 504h2v1h-2zM128 504h1v1h-1zM140 504h1v1h-1zM144 504h1v1h-1zM147 504h1v2h-1zM151 504h2v1h-2zM171 504h1v1h-1zM173 504h1v2h-1zM176 504h1v1h-1zM196 504h2v1h-2zM223 504h3v1h-3zM238 504h1v2h-1zM249 504h1v1h-1zM255 504h2v1h-2zM261 504h2v1h-2zM273 504h1v2h-1zM282 504h1v1h-1zM285 504h1v2h-1zM287 504h2v1h-2zM300 504h1v1h-1zM304 504h1v1h-1zM321 504h5v1h-5zM343 504h3v1h-3zM379 504h1v2h-1zM395 504h1v1h-1zM409 504h2v1h-2zM37 505h1v2h-1zM49 505h2v1h-2zM54 505h1v2h-1zM63 505h1v2h-1zM79 505h3v1h-3zM105 505h1v1h-1zM145 505h1v2h-1zM162 505h1v1h-1zM172 505h1v1h-1zM177 505h3v1h-3zM206 505h1v1h-1zM225 505h1v1h-1zM236 505h1v2h-1zM257 505h4v1h-4zM281 505h1v2h-1zM283 505h1v1h-1zM301 505h1v2h-1zM303 505h1v2h-1zM372 505h1v2h-1zM17 506h1v2h-1zM23 506h1v2h-1zM32 506h1v2h-1zM51 506h2v1h-2zM62 506h1v2h-1zM146 506h1v2h-1zM163 506h1v2h-1zM237 506h1v2h-1zM274 506h2v1h-2zM284 506h1v1h-1zM378 506h1v2h-1zM36 507h1v1h-1zM53 507h1v1h-1zM164 507h1v2h-1zM276 507h1v1h-1zM280 507h1v2h-1zM302 507h1v1h-1zM373 507h1v2h-1zM375 507h3v1h-3zM24 508h1v2h-1zM33 508h1v2h-1zM35 508h1v2h-1zM277 508h2v1h-2zM374 508h1v1h-1zM279 509h1v1h-1zM34 510h1v1h-1zM10 514h1v3h-1zM19 514h1v3h-1zM9 516h1v4h-1zM18 516h1v3h-1zM100 516h1v2h-1zM11 517h1v5h-1zM20 517h1v4h-1zM94 517h1v2h-1zM350 517h1v2h-1zM6 518h1v22h-1zM57 518h1v2h-1zM93 518h1v2h-1zM99 518h1v2h-1zM101 518h1v2h-1zM17 519h1v4h-1zM46 519h1v2h-1zM75 519h1v3h-1zM95 519h1v2h-1zM183 519h2v1h-2zM247 519h1v3h-1zM295 519h1v2h-1zM307 519h1v1h-1zM349 519h1v4h-1zM351 519h1v3h-1zM8 520h1v5h-1zM56 520h1v3h-1zM58 520h1v2h-1zM65 520h1v2h-1zM73 520h2v1h-2zM92 520h1v2h-1zM98 520h1v2h-1zM102 520h1v3h-1zM123 520h1v2h-1zM134 520h2v1h-2zM167 520h1v2h-1zM175 520h1v2h-1zM182 520h1v1h-1zM185 520h2v1h-2zM246 520h1v1h-1zM306 520h1v2h-1zM308 520h2v1h-2zM319 520h1v2h-1zM370 520h1v2h-1zM384 520h1v3h-1zM401 520h1v2h-1zM21 521h1v3h-1zM45 521h1v4h-1zM47 521h1v3h-1zM71 521h2v1h-2zM83 521h1v1h-1zM96 521h1v2h-1zM122 521h1v2h-1zM134 521h1v1h-1zM136 521h2v1h-2zM149 521h1v3h-1zM168 521h1v2h-1zM181 521h1v2h-1zM186 521h1v1h-1zM202 521h1v1h-1zM214 521h1v2h-1zM232 521h1v1h-1zM245 521h1v2h-1zM265 521h1v1h-1zM291 521h1v1h-1zM294 521h1v2h-1zM296 521h1v4h-1zM310 521h3v1h-3zM316 521h3v1h-3zM329 521h1v2h-1zM341 521h1v1h-1zM368 521h2v1h-2zM402 521h1v2h-1zM12 522h1v4h-1zM42 522h1v5h-1zM59 522h1v2h-1zM64 522h1v3h-1zM66 522h2v1h-2zM69 522h2v1h-2zM76 522h1v4h-1zM82 522h1v1h-1zM84 522h2v1h-2zM91 522h1v2h-1zM97 522h1v2h-1zM112 522h2v1h-2zM124 522h1v2h-1zM133 522h1v2h-1zM138 522h1v2h-1zM142 522h1v1h-1zM157 522h2v1h-2zM166 522h1v2h-1zM174 522h1v2h-1zM176 522h1v3h-1zM187 522h1v2h-1zM201 522h1v1h-1zM203 522h1v1h-1zM210 522h1v4h-1zM227 522h1v3h-1zM231 522h1v2h-1zM233 522h1v2h-1zM241 522h2v1h-2zM248 522h1v4h-1zM264 522h1v1h-1zM266 522h1v1h-1zM290 522h1v2h-1zM292 522h1v2h-1zM305 522h1v2h-1zM313 522h3v1h-3zM320 522h1v2h-1zM330 522h1v2h-1zM340 522h1v1h-1zM342 522h1v2h-1zM352 522h1v3h-1zM366 522h2v1h-2zM371 522h1v4h-1zM385 522h1v2h-1zM400 522h1v2h-1zM16 523h1v4h-1zM55 523h1v2h-1zM68 523h1v1h-1zM80 523h2v1h-2zM86 523h1v1h-1zM90 523h1v1h-1zM103 523h1v2h-1zM111 523h1v1h-1zM114 523h2v1h-2zM121 523h1v1h-1zM129 523h1v2h-1zM141 523h1v2h-1zM143 523h1v2h-1zM148 523h1v2h-1zM155 523h2v1h-2zM159 523h1v1h-1zM169 523h1v2h-1zM180 523h1v2h-1zM200 523h1v1h-1zM204 523h1v1h-1zM209 523h1v2h-1zM213 523h1v2h-1zM215 523h1v2h-1zM220 523h1v1h-1zM228 523h2v1h-2zM240 523h1v2h-1zM243 523h2v1h-2zM250 523h1v3h-1zM263 523h1v1h-1zM267 523h2v1h-2zM293 523h1v2h-1zM328 523h1v2h-1zM334 523h2v1h-2zM339 523h1v1h-1zM348 523h1v2h-1zM358 523h4v1h-4zM365 523h1v1h-1zM383 523h1v3h-1zM393 523h1v1h-1zM403 523h1v1h-1zM412 523h1v1h-1zM22 524h1v3h-1zM27 524h1v7h-1zM31 524h1v2h-1zM39 524h1v2h-1zM41 524h1v2h-1zM48 524h1v2h-1zM60 524h1v2h-1zM79 524h1v1h-1zM87 524h3v1h-3zM107 524h2v1h-2zM110 524h1v1h-1zM116 524h1v1h-1zM120 524h1v2h-1zM125 524h2v1h-2zM128 524h1v1h-1zM132 524h1v2h-1zM139 524h1v1h-1zM150 524h1v3h-1zM155 524h1v1h-1zM160 524h1v1h-1zM165 524h1v2h-1zM173 524h1v3h-1zM188 524h1v2h-1zM191 524h1v1h-1zM199 524h1v1h-1zM205 524h1v1h-1zM219 524h1v2h-1zM221 524h1v2h-1zM230 524h1v1h-1zM234 524h1v2h-1zM251 524h2v1h-2zM262 524h1v1h-1zM269 524h2v1h-2zM289 524h1v2h-1zM304 524h1v2h-1zM321 524h1v2h-1zM331 524h1v1h-1zM334 524h1v1h-1zM336 524h3v1h-3zM343 524h1v1h-1zM357 524h1v1h-1zM362 524h1v2h-1zM364 524h1v2h-1zM386 524h1v2h-1zM391 524h2v1h-2zM394 524h1v2h-1zM398 524h2v1h-2zM404 524h1v2h-1zM408 524h4v1h-4zM413 524h1v2h-1zM7 525h1v16h-1zM32 525h1v2h-1zM38 525h1v1h-1zM44 525h1v4h-1zM53 525h2v1h-2zM63 525h1v4h-1zM78 525h1v2h-1zM104 525h1v2h-1zM106 525h1v2h-1zM109 525h1v1h-1zM117 525h2v1h-2zM127 525h1v1h-1zM130 525h1v2h-1zM140 525h1v1h-1zM144 525h1v1h-1zM147 525h1v2h-1zM154 525h1v3h-1zM161 525h1v2h-1zM170 525h1v1h-1zM177 525h1v2h-1zM179 525h1v2h-1zM190 525h1v2h-1zM192 525h1v1h-1zM197 525h2v1h-2zM206 525h1v2h-1zM208 525h1v2h-1zM212 525h1v3h-1zM216 525h2v1h-2zM226 525h1v4h-1zM239 525h1v2h-1zM253 525h1v2h-1zM261 525h1v1h-1zM271 525h1v1h-1zM282 525h1v1h-1zM286 525h3v1h-3zM297 525h1v2h-1zM327 525h1v3h-1zM332 525h2v2h-2zM344 525h1v1h-1zM347 525h1v2h-1zM353 525h1v2h-1zM356 525h1v1h-1zM382 525h1v1h-1zM389 525h2v1h-2zM397 525h1v2h-1zM407 525h1v1h-1zM415 525h1v1h-1zM13 526h1v5h-1zM28 526h1v2h-1zM30 526h1v2h-1zM37 526h1v1h-1zM40 526h1v2h-1zM49 526h1v2h-1zM51 526h2v1h-2zM61 526h1v3h-1zM77 526h1v2h-1zM119 526h1v1h-1zM131 526h1v2h-1zM145 526h1v2h-1zM164 526h1v2h-1zM171 526h1v2h-1zM189 526h1v2h-1zM193 526h1v1h-1zM195 526h2v1h-2zM211 526h1v4h-1zM218 526h1v1h-1zM222 526h1v1h-1zM235 526h1v2h-1zM249 526h1v3h-1zM260 526h1v2h-1zM272 526h1v1h-1zM275 526h2v1h-2zM281 526h1v1h-1zM283 526h1v2h-1zM285 526h1v2h-1zM298 526h1v1h-1zM303 526h1v2h-1zM322 526h1v2h-1zM345 526h1v1h-1zM355 526h1v1h-1zM363 526h1v1h-1zM372 526h1v3h-1zM380 526h2v1h-2zM387 526h2v1h-2zM395 526h1v1h-1zM405 526h2v1h-2zM414 526h1v1h-1zM15 527h1v4h-1zM23 527h1v4h-1zM33 527h1v2h-1zM36 527h1v1h-1zM43 527h1v4h-1zM50 527h1v1h-1zM105 527h1v1h-1zM146 527h1v2h-1zM151 527h1v1h-1zM162 527h1v2h-1zM172 527h1v2h-1zM178 527h1v2h-1zM194 527h1v1h-1zM207 527h1v1h-1zM223 527h1v2h-1zM238 527h1v2h-1zM254 527h1v2h-1zM273 527h2v1h-2zM277 527h1v1h-1zM280 527h1v2h-1zM299 527h4v1h-4zM333 527h1v1h-1zM346 527h1v1h-1zM354 527h1v1h-1zM375 527h5v1h-5zM396 527h1v1h-1zM405 527h1v1h-1zM29 528h1v2h-1zM35 528h1v1h-1zM152 528h2v1h-2zM163 528h1v2h-1zM236 528h1v2h-1zM258 528h2v1h-2zM278 528h1v1h-1zM284 528h1v1h-1zM323 528h2v1h-2zM326 528h1v2h-1zM374 528h1v2h-1zM34 529h1v1h-1zM62 529h1v2h-1zM153 529h1v1h-1zM224 529h2v1h-2zM237 529h1v2h-1zM255 529h3v1h-3zM279 529h1v1h-1zM325 529h1v1h-1zM373 529h1v2h-1zM14 531h1v3h-1zM24 531h1v3h-1zM26 531h1v8h-1zM25 534h1v3h-1zM5 540h1v33h-1zM6 541h1v10h-1zM4 554h1v6h-1zM3 560h1v2h-1zM2 562h1v8h-1zM1 570h1v23h-1zM4 573h1v11h-1zM3 584h1v1h-1zM2 585h1v2h-1z"/>
<path fill="#000050" d="M128 9h4v1h-4zM124 10h12v1h-12zM121 11h18v1h-18zM120 12h20v1h-20zM119 13h22v1h-22zM282 13h8v1h-8zM334 13h8v1h-8zM118 14h24v1h-24zM280 14h12v1h-12zM332 14h12v1h-12zM117 15h26v1h-26zM278 15h16v1h-16zM330 15h16v1h-16zM116 16h28v1h-28zM276 16h20v1h-20zM329 16h18v1h-18zM115 17h30v1h-30zM275 17h22v2h-22zM328 17h20v1h-20zM114 18h32v3h-32zM327 18h22v1h-22zM274 19h24v2h-24zM326 19h24v2h-24zM113 21h34v4h-34zM273 21h26v2h-26zM325 21h26v2h-26zM272 23h28v8h-28zM324 23h28v8h-28zM112 25h36v4h-36zM113 29h34v4h-34zM273 31h26v2h-26zM325 31h26v2h-26zM114 33h32v3h-32zM274 33h24v2h-24zM326 33h24v2h-24zM275 35h22v2h-22zM327 35h22v1h-22zM115 36h30v1h-30zM328 36h20v1h-20zM116 37h28v1h-28zM276 37h20v1h-20zM329 37h18v1h-18zM117 38h26v1h-26zM278 38h16v1h-16zM330 38h16v1h-16zM118 39h24v1h-24zM280 39h12v1h-12zM332 39h12v1h-12zM119 40h22v1h-22zM282 40h8v1h-8zM334 40h8v1h-8zM120 41h20v1h-20zM121 42h18v1h-18zM124 43h12v1h-12zM128 44h4v1h-4zM387 75h6v1h-6zM285 76h2v1h-2zM386 76h8v6h-8zM284 77h4v1h-4zM283 78h6v2h-6zM284 80h4v1h-4zM285 81h2v1h-2zM387 82h6v1h-6zM335 121h6v1h-6zM333 122h10v1h-10zM331 123h14v1h-14zM330 124h16v2h-16zM129 126h2v1h-2zM329 126h18v2h-18zM127 127h6v1h-6zM126 128h8v2h-8zM328 128h20v6h-20zM125 130h10v2h-10zM285 130h2v2h-2zM126 132h8v2h-8zM127 134h6v1h-6zM329 134h18v2h-18zM129 135h2v1h-2zM330 136h16v2h-16zM331 138h14v1h-14zM333 139h10v1h-10zM335 140h6v1h-6zM388 162h4v1h-4zM384 163h12v1h-12zM380 164h20v1h-20zM378 165h24v1h-24zM377 166h26v1h-26zM376 167h28v1h-28zM375 168h30v1h-30zM374 169h32v1h-32zM373 170h34v1h-34zM372 171h36v2h-36zM371 173h38v4h-38zM370 177h40v4h-40zM181 181h2v1h-2zM369 181h42v4h-42zM180 182h4v2h-4zM181 184h2v1h-2zM370 185h40v4h-40zM371 189h38v4h-38zM372 193h36v2h-36zM373 195h34v1h-34zM374 196h32v1h-32zM375 197h30v1h-30zM376 198h28v1h-28zM377 199h26v1h-26zM378 200h24v1h-24zM380 201h20v1h-20zM384 202h12v1h-12zM388 203h4v1h-4zM332 219h12v1h-12zM385 219h10v1h-10zM331 220h14v1h-14zM383 220h14v1h-14zM329 221h18v1h-18zM382 221h16v1h-16zM126 222h8v1h-8zM327 222h22v1h-22zM380 222h20v1h-20zM124 223h12v1h-12zM326 223h24v1h-24zM378 223h24v2h-24zM122 224h16v1h-16zM325 224h26v2h-26zM121 225h18v1h-18zM377 225h26v2h-26zM120 226h20v1h-20zM324 226h28v2h-28zM119 227h22v2h-22zM376 227h28v1h-28zM323 228h30v1h-30zM375 228h30v2h-30zM118 229h24v2h-24zM322 229h32v12h-32zM374 230h32v10h-32zM117 231h26v8h-26zM118 239h24v2h-24zM375 240h30v2h-30zM119 241h22v2h-22zM323 241h30v1h-30zM324 242h28v2h-28zM376 242h28v1h-28zM120 243h20v1h-20zM377 243h26v2h-26zM121 244h18v1h-18zM325 244h26v2h-26zM122 245h16v1h-16zM378 245h24v2h-24zM124 246h12v1h-12zM326 246h24v1h-24zM126 247h8v1h-8zM327 247h22v1h-22zM380 247h20v1h-20zM329 248h18v1h-18zM382 248h16v1h-16zM331 249h14v1h-14zM383 249h14v1h-14zM332 250h12v1h-12zM385 250h10v1h-10zM125 272h10v1h-10zM123 273h14v1h-14zM122 274h16v1h-16zM120 275h20v1h-20zM119 276h22v1h-22zM118 277h24v2h-24zM117 279h26v1h-26zM116 280h28v2h-28zM115 282h30v10h-30zM116 292h28v2h-28zM117 294h26v1h-26zM118 295h24v2h-24zM119 297h22v1h-22zM120 298h20v1h-20zM122 299h16v1h-16zM123 300h14v1h-14zM125 301h10v1h-10z"/>
<path fill="#00ffaa" d="M231 17h6v1h-6zM229 18h2v1h-2zM237 18h2v1h-2zM228 19h1v1h-1zM239 19h1v1h-1zM227 20h1v1h-1zM240 20h1v1h-1zM226 21h1v1h-1zM241 21h1v1h-1zM225 22h1v2h-1zM242 22h1v2h-1zM224 24h1v6h-1zM243 24h1v6h-1zM181 26h2v2h-2zM225 30h1v2h-1zM242 30h1v2h-1zM226 32h1v1h-1zM241 32h1v1h-1zM227 33h1v1h-1zM240 33h1v1h-1zM228 34h1v1h-1zM239 34h1v1h-1zM229 35h2v1h-2zM237 35h2v1h-2zM231 36h6v1h-6zM180 58h4v1h-4zM176 59h4v1h-4zM184 59h4v1h-4zM172 60h4v1h-4zM188 60h4v1h-4zM232 60h4v1h-4zM171 61h1v1h-1zM192 61h1v1h-1zM228 61h4v1h-4zM236 61h4v1h-4zM170 62h1v1h-1zM193 62h1v1h-1zM224 62h4v1h-4zM240 62h4v1h-4zM169 63h1v1h-1zM194 63h1v1h-1zM224 63h1v1h-1zM243 63h1v1h-1zM168 64h1v1h-1zM195 64h1v1h-1zM223 64h1v1h-1zM244 64h1v1h-1zM167 65h1v1h-1zM196 65h1v1h-1zM222 65h1v1h-1zM245 65h1v1h-1zM166 66h1v1h-1zM197 66h1v1h-1zM221 66h1v1h-1zM246 66h1v1h-1zM165 67h1v1h-1zM198 67h1v1h-1zM220 67h1v1h-1zM247 67h1v1h-1zM164 68h1v1h-1zM199 68h1v1h-1zM219 68h1v1h-1zM248 68h1v1h-1zM163 69h1v4h-1zM200 69h1v4h-1zM217 69h2v1h-2zM249 69h2v1h-2zM217 70h1v3h-1zM250 70h1v3h-1zM162 73h1v4h-1zM201 73h1v4h-1zM216 73h1v4h-1zM251 73h1v4h-1zM161 77h1v4h-1zM202 77h1v4h-1zM215 77h1v4h-1zM252 77h1v4h-1zM77 78h2v2h-2zM162 81h1v4h-1zM201 81h1v4h-1zM216 81h1v4h-1zM251 81h1v4h-1zM163 85h1v4h-1zM200 85h1v4h-1zM217 85h1v4h-1zM250 85h1v4h-1zM218 88h1v1h-1zM249 88h1v1h-1zM164 89h1v1h-1zM199 89h1v1h-1zM219 89h1v1h-1zM248 89h1v1h-1zM165 90h1v1h-1zM198 90h1v1h-1zM220 90h1v1h-1zM247 90h1v1h-1zM166 91h1v1h-1zM197 91h1v1h-1zM221 91h1v1h-1zM246 91h1v1h-1zM167 92h1v1h-1zM196 92h1v1h-1zM222 92h1v1h-1zM245 92h1v1h-1zM168 93h1v1h-1zM195 93h1v1h-1zM223 93h1v1h-1zM244 93h1v1h-1zM169 94h1v1h-1zM194 94h1v1h-1zM224 94h1v2h-1zM243 94h1v2h-1zM170 95h1v1h-1zM193 95h1v1h-1zM225 95h3v1h-3zM240 95h3v1h-3zM171 96h1v1h-1zM192 96h1v1h-1zM228 96h4v1h-4zM236 96h4v1h-4zM172 97h4v1h-4zM188 97h4v1h-4zM232 97h4v1h-4zM176 98h4v1h-4zM184 98h4v1h-4zM180 99h4v1h-4zM24 110h4v1h-4zM20 111h4v1h-4zM28 111h4v1h-4zM16 112h4v1h-4zM32 112h4v1h-4zM15 113h1v1h-1zM36 113h1v1h-1zM14 114h1v1h-1zM37 114h1v1h-1zM229 114h10v1h-10zM13 115h1v1h-1zM38 115h1v1h-1zM177 115h10v1h-10zM227 115h2v1h-2zM239 115h2v1h-2zM12 116h1v1h-1zM39 116h1v1h-1zM175 116h2v1h-2zM187 116h2v1h-2zM226 116h1v1h-1zM241 116h1v1h-1zM11 117h1v1h-1zM40 117h1v1h-1zM174 117h1v1h-1zM189 117h1v1h-1zM224 117h2v1h-2zM242 117h2v1h-2zM10 118h1v1h-1zM41 118h1v1h-1zM172 118h2v1h-2zM190 118h2v1h-2zM222 118h2v1h-2zM244 118h2v1h-2zM9 119h1v1h-1zM42 119h1v1h-1zM170 119h2v1h-2zM192 119h2v1h-2zM221 119h1v2h-1zM246 119h1v2h-1zM8 120h1v1h-1zM43 120h1v1h-1zM170 120h1v1h-1zM193 120h1v1h-1zM7 121h1v4h-1zM44 121h1v4h-1zM169 121h1v2h-1zM194 121h1v2h-1zM220 121h1v2h-1zM247 121h1v2h-1zM168 123h1v1h-1zM195 123h1v1h-1zM219 123h1v1h-1zM248 123h1v1h-1zM167 124h1v2h-1zM196 124h1v2h-1zM218 124h1v2h-1zM249 124h1v2h-1zM6 125h1v4h-1zM45 125h1v4h-1zM166 126h1v10h-1zM197 126h1v10h-1zM217 126h1v10h-1zM250 126h1v10h-1zM5 129h1v4h-1zM46 129h1v4h-1zM6 133h1v4h-1zM45 133h1v4h-1zM167 136h1v2h-1zM196 136h1v2h-1zM218 136h1v2h-1zM249 136h1v2h-1zM7 137h1v4h-1zM44 137h1v4h-1zM168 138h1v1h-1zM195 138h1v1h-1zM219 138h1v1h-1zM248 138h1v1h-1zM169 139h1v2h-1zM194 139h1v2h-1zM220 139h1v2h-1zM247 139h1v2h-1zM8 141h1v1h-1zM43 141h1v1h-1zM170 141h1v2h-1zM193 141h1v2h-1zM221 141h1v2h-1zM246 141h1v2h-1zM9 142h1v1h-1zM42 142h1v1h-1zM171 142h1v1h-1zM192 142h1v1h-1zM10 143h1v1h-1zM41 143h1v1h-1zM172 143h2v1h-2zM190 143h2v1h-2zM222 143h2v1h-2zM244 143h2v1h-2zM11 144h1v1h-1zM40 144h1v1h-1zM174 144h1v1h-1zM189 144h1v1h-1zM224 144h2v1h-2zM242 144h2v1h-2zM12 145h1v1h-1zM39 145h1v1h-1zM175 145h2v1h-2zM187 145h2v1h-2zM226 145h1v1h-1zM241 145h1v1h-1zM13 146h1v1h-1zM38 146h1v1h-1zM177 146h10v1h-10zM227 146h2v1h-2zM239 146h2v1h-2zM14 147h1v1h-1zM37 147h1v1h-1zM229 147h10v1h-10zM15 148h1v1h-1zM36 148h1v1h-1zM16 149h4v1h-4zM32 149h4v1h-4zM20 150h4v1h-4zM28 150h4v1h-4zM24 151h4v1h-4zM231 174h6v1h-6zM229 175h2v1h-2zM237 175h2v1h-2zM228 176h1v1h-1zM239 176h1v1h-1zM227 177h1v1h-1zM240 177h1v1h-1zM226 178h1v2h-1zM241 178h1v2h-1zM225 180h1v6h-1zM242 180h1v6h-1zM226 186h1v2h-1zM241 186h1v2h-1zM227 188h1v1h-1zM240 188h1v1h-1zM228 189h1v1h-1zM239 189h1v1h-1zM229 190h2v1h-2zM237 190h2v1h-2zM231 191h6v1h-6zM496 241h20v1h-20zM25 286h2v2h-2zM21 322h10v1h-10zM19 323h2v1h-2zM31 323h2v1h-2zM18 324h1v1h-1zM33 324h1v1h-1zM16 325h2v1h-2zM34 325h2v1h-2zM14 326h2v1h-2zM36 326h2v1h-2zM13 327h1v2h-1zM38 327h1v2h-1zM12 329h1v2h-1zM39 329h1v2h-1zM11 331h1v1h-1zM40 331h1v1h-1zM10 332h1v2h-1zM41 332h1v2h-1zM9 334h1v10h-1zM42 334h1v10h-1zM496 339h1v1h-1zM10 344h1v2h-1zM41 344h1v2h-1zM11 346h1v1h-1zM40 346h1v1h-1zM12 347h1v2h-1zM39 347h1v2h-1zM13 349h1v2h-1zM38 349h1v2h-1zM14 351h2v1h-2zM36 351h2v1h-2zM16 352h2v1h-2zM34 352h2v1h-2zM18 353h1v1h-1zM33 353h1v1h-1zM19 354h2v1h-2zM31 354h2v1h-2zM21 355h10v1h-10zM436 399h1v1h-1zM596 399h1v1h-1zM496 499h1v1h-1z"/>
<path fill="#005035" d="M231 18h6v1h-6zM229 19h10v1h-10zM228 20h12v1h-12zM227 21h14v1h-14zM226 22h16v2h-16zM225 24h18v6h-18zM226 30h16v2h-16zM227 32h14v1h-14zM228 33h12v1h-12zM229 34h10v1h-10zM231 35h6v1h-6zM180 59h4v1h-4zM176 60h12v1h-12zM172 61h20v1h-20zM232 61h4v1h-4zM171 62h22v1h-22zM228 62h12v1h-12zM170 63h24v1h-24zM225 63h18v1h-18zM169 64h26v1h-26zM224 64h20v1h-20zM168 65h28v1h-28zM223 65h22v1h-22zM167 66h30v1h-30zM222 66h24v1h-24zM166 67h32v1h-32zM221 67h26v1h-26zM165 68h34v1h-34zM220 68h28v1h-28zM164 69h36v4h-36zM219 69h30v1h-30zM218 70h32v3h-32zM163 73h38v4h-38zM217 73h34v4h-34zM162 77h40v4h-40zM216 77h36v4h-36zM163 81h38v4h-38zM217 81h34v4h-34zM164 85h36v4h-36zM218 85h32v3h-32zM219 88h30v1h-30zM165 89h34v1h-34zM220 89h28v1h-28zM166 90h32v1h-32zM221 90h26v1h-26zM167 91h30v1h-30zM222 91h24v1h-24zM168 92h28v1h-28zM223 92h22v1h-22zM169 93h26v1h-26zM224 93h20v1h-20zM170 94h24v1h-24zM225 94h18v1h-18zM171 95h22v1h-22zM228 95h12v1h-12zM172 96h20v1h-20zM232 96h4v1h-4zM176 97h12v1h-12zM180 98h4v1h-4zM24 111h4v1h-4zM20 112h12v1h-12zM16 113h20v1h-20zM15 114h22v1h-22zM14 115h24v1h-24zM229 115h10v1h-10zM13 116h26v1h-26zM177 116h10v1h-10zM227 116h14v1h-14zM12 117h28v1h-28zM175 117h14v1h-14zM226 117h16v1h-16zM11 118h30v1h-30zM174 118h16v1h-16zM224 118h20v1h-20zM10 119h32v1h-32zM172 119h20v1h-20zM222 119h24v2h-24zM9 120h34v1h-34zM171 120h22v1h-22zM8 121h36v4h-36zM170 121h24v2h-24zM221 121h26v2h-26zM169 123h26v1h-26zM220 123h28v1h-28zM168 124h28v2h-28zM219 124h30v2h-30zM7 125h38v4h-38zM167 126h30v10h-30zM218 126h32v10h-32zM6 129h40v4h-40zM7 133h38v4h-38zM168 136h28v2h-28zM219 136h30v2h-30zM8 137h36v4h-36zM169 138h26v1h-26zM220 138h28v1h-28zM170 139h24v2h-24zM221 139h26v2h-26zM9 141h34v1h-34zM171 141h22v1h-22zM222 141h24v2h-24zM10 142h32v1h-32zM172 142h20v1h-20zM11 143h30v1h-30zM174 143h16v1h-16zM224 143h20v1h-20zM12 144h28v1h-28zM175 144h14v1h-14zM226 144h16v1h-16zM13 145h26v1h-26zM177 145h10v1h-10zM227 145h14v1h-14zM14 146h24v1h-24zM229 146h10v1h-10zM15 147h22v1h-22zM16 148h20v1h-20zM20 149h12v1h-12zM24 150h4v1h-4zM231 175h6v1h-6zM229 176h10v1h-10zM228 177h12v1h-12zM227 178h14v2h-14zM226 180h16v6h-16zM227 186h14v2h-14zM228 188h12v1h-12zM229 189h10v1h-10zM231 190h6v1h-6zM21 323h10v1h-10zM19 324h14v1h-14zM18 325h16v1h-16zM16 326h20v1h-20zM14 327h24v2h-24zM13 329h26v2h-26zM12 331h28v1h-28zM11 332h30v2h-30zM10 334h32v10h-32zM11 344h30v2h-30zM12 346h28v1h-28zM13 347h26v2h-26zM14 349h24v2h-24zM16 351h20v1h-20zM18 352h16v1h-16zM19 353h14v1h-14zM21 354h10v1h-10z"/>
<path fill="#00aaff" d="M387 120h6v1h-6zM385 121h2v1h-2zM393 121h2v1h-2zM383 122h2v1h-2zM395 122h2v1h-2zM382 123h1v1h-1zM397 123h1v1h-1zM381 124h1v2h-1zM398 124h1v2h-1zM380 126h1v2h-1zM399 126h1v2h-1zM379 128h1v6h-1zM400 128h1v6h-1zM380 134h1v2h-1zM399 134h1v2h-1zM381 136h1v2h-1zM398 136h1v2h-1zM382 138h1v1h-1zM397 138h1v1h-1zM383 139h2v1h-2zM395 139h2v1h-2zM385 140h2v1h-2zM393 140h2v1h-2zM387 141h6v1h-6zM333 166h10v1h-10zM331 167h2v1h-2zM343 167h2v1h-2zM329 168h2v1h-2zM345 168h2v1h-2zM328 169h1v1h-1zM347 169h1v1h-1zM283 170h6v1h-6zM325 170h3v1h-3zM348 170h3v1h-3zM280 171h3v1h-3zM289 171h3v1h-3zM325 171h1v2h-1zM350 171h1v2h-1zM279 172h1v1h-1zM292 172h1v1h-1zM277 173h2v1h-2zM293 173h2v1h-2zM324 173h1v1h-1zM351 173h1v1h-1zM276 174h1v2h-1zM295 174h1v1h-1zM323 174h1v2h-1zM352 174h1v2h-1zM296 175h1v2h-1zM275 176h1v1h-1zM322 176h1v2h-1zM353 176h1v2h-1zM274 177h1v3h-1zM297 177h1v2h-1zM321 178h1v10h-1zM354 178h1v10h-1zM298 179h1v8h-1zM273 180h1v6h-1zM25 181h2v1h-2zM77 181h2v1h-2zM24 182h4v1h-4zM76 182h4v2h-4zM25 183h3v1h-3zM26 184h1v1h-1zM77 184h2v1h-2zM274 186h1v3h-1zM297 187h1v2h-1zM322 188h1v2h-1zM353 188h1v2h-1zM275 189h1v1h-1zM296 189h1v2h-1zM276 190h1v2h-1zM323 190h1v2h-1zM352 190h1v2h-1zM295 191h1v1h-1zM277 192h1v1h-1zM294 192h1v1h-1zM324 192h1v1h-1zM351 192h1v1h-1zM278 193h2v1h-2zM292 193h2v1h-2zM325 193h1v3h-1zM350 193h1v3h-1zM280 194h2v1h-2zM290 194h2v1h-2zM282 195h8v1h-8zM326 195h2v1h-2zM348 195h2v1h-2zM328 196h1v1h-1zM347 196h1v1h-1zM329 197h2v1h-2zM345 197h2v1h-2zM331 198h2v1h-2zM343 198h2v1h-2zM333 199h10v1h-10zM75 225h6v1h-6zM73 226h2v1h-2zM81 226h2v1h-2zM72 227h1v1h-1zM83 227h1v1h-1zM71 228h1v1h-1zM84 228h1v1h-1zM70 229h1v1h-1zM85 229h1v1h-1zM24 230h4v1h-4zM69 230h1v2h-1zM86 230h1v2h-1zM23 231h1v1h-1zM28 231h1v1h-1zM284 231h4v1h-4zM22 232h1v1h-1zM29 232h1v1h-1zM68 232h1v6h-1zM87 232h1v6h-1zM283 232h2v1h-2zM287 232h2v1h-2zM21 233h1v4h-1zM30 233h1v4h-1zM282 233h2v1h-2zM288 233h2v1h-2zM282 234h1v3h-1zM289 234h1v3h-1zM283 236h1v2h-1zM288 236h1v2h-1zM22 237h1v1h-1zM29 237h1v1h-1zM284 237h1v2h-1zM287 237h1v2h-1zM23 238h1v1h-1zM28 238h1v1h-1zM69 238h1v2h-1zM86 238h1v2h-1zM285 238h2v1h-2zM24 239h4v1h-4zM70 240h1v1h-1zM85 240h1v1h-1zM71 241h1v1h-1zM84 241h1v1h-1zM72 242h1v1h-1zM83 242h1v1h-1zM73 243h2v1h-2zM81 243h2v1h-2zM75 244h6v1h-6zM476 255h20v1h-20zM385 266h9v1h-9zM383 267h2v1h-2zM394 267h4v1h-4zM381 268h2v1h-2zM398 268h2v1h-2zM378 269h3v1h-3zM400 269h1v1h-1zM376 270h2v1h-2zM401 270h2v1h-2zM73 271h10v1h-10zM376 271h1v1h-1zM403 271h1v1h-1zM71 272h2v1h-2zM83 272h2v1h-2zM375 272h1v1h-1zM404 272h1v1h-1zM70 273h1v1h-1zM85 273h1v1h-1zM374 273h1v1h-1zM405 273h2v1h-2zM68 274h2v1h-2zM86 274h2v1h-2zM373 274h1v2h-1zM406 274h1v1h-1zM66 275h2v1h-2zM88 275h2v1h-2zM407 275h1v3h-1zM66 276h1v1h-1zM89 276h1v1h-1zM372 276h1v1h-1zM65 277h1v2h-1zM90 277h1v2h-1zM371 277h1v2h-1zM408 278h1v2h-1zM64 279h1v1h-1zM91 279h1v1h-1zM370 279h1v4h-1zM63 280h1v2h-1zM92 280h1v2h-1zM409 280h1v2h-1zM62 282h1v10h-1zM93 282h1v10h-1zM410 282h1v9h-1zM369 283h1v9h-1zM181 284h2v1h-2zM180 285h4v1h-4zM179 286h2v2h-2zM183 286h2v2h-2zM180 288h4v1h-4zM181 289h2v1h-2zM409 291h1v4h-1zM63 292h1v2h-1zM92 292h1v2h-1zM370 292h1v2h-1zM64 294h1v1h-1zM91 294h1v1h-1zM371 294h1v2h-1zM65 295h1v2h-1zM90 295h1v2h-1zM408 295h1v2h-1zM372 296h1v3h-1zM66 297h1v2h-1zM89 297h1v2h-1zM407 297h1v1h-1zM67 298h1v1h-1zM88 298h1v1h-1zM406 298h1v2h-1zM68 299h2v1h-2zM86 299h2v1h-2zM373 299h1v2h-1zM70 300h1v1h-1zM85 300h1v1h-1zM374 300h1v1h-1zM405 300h1v1h-1zM71 301h2v1h-2zM83 301h2v1h-2zM375 301h1v1h-1zM404 301h1v1h-1zM73 302h10v1h-10zM376 302h1v1h-1zM403 302h1v2h-1zM377 303h2v1h-2zM402 303h1v1h-1zM379 304h1v1h-1zM399 304h3v1h-3zM380 305h2v1h-2zM397 305h2v1h-2zM382 306h4v1h-4zM395 306h2v1h-2zM386 307h9v1h-9zM125 321h10v1h-10zM123 322h2v1h-2zM135 322h2v1h-2zM122 323h1v1h-1zM137 323h1v1h-1zM120 324h2v1h-2zM138 324h2v1h-2zM118 325h2v1h-2zM140 325h2v1h-2zM117 326h1v1h-1zM142 326h1v1h-1zM116 327h1v2h-1zM143 327h1v2h-1zM115 329h1v2h-1zM144 329h1v2h-1zM114 331h1v1h-1zM145 331h1v1h-1zM113 332h1v2h-1zM146 332h1v2h-1zM112 334h1v10h-1zM147 334h1v10h-1zM181 336h2v1h-2zM180 337h1v1h-1zM183 337h1v1h-1zM179 338h1v2h-1zM184 338h1v2h-1zM476 339h1v1h-1zM180 340h1v1h-1zM183 340h1v1h-1zM181 341h2v1h-2zM113 344h1v2h-1zM146 344h1v2h-1zM114 346h1v1h-1zM145 346h1v1h-1zM115 347h1v2h-1zM144 347h1v2h-1zM116 349h1v2h-1zM143 349h1v2h-1zM117 351h1v1h-1zM142 351h1v1h-1zM118 352h2v1h-2zM140 352h2v1h-2zM120 353h2v1h-2zM138 353h2v1h-2zM122 354h1v1h-1zM137 354h1v1h-1zM123 355h2v1h-2zM135 355h2v1h-2zM125 356h10v1h-10zM179 378h6v1h-6zM176 379h3v1h-3zM185 379h3v1h-3zM436 379h1v1h-1zM596 379h1v1h-1zM175 380h1v1h-1zM188 380h1v1h-1zM173 381h2v1h-2zM189 381h2v1h-2zM172 382h1v2h-1zM191 382h1v1h-1zM192 383h1v2h-1zM171 384h1v1h-1zM170 385h1v3h-1zM193 385h1v2h-1zM194 387h1v8h-1zM169 388h1v6h-1zM129 389h2v1h-2zM285 389h2v1h-2zM128 390h4v2h-4zM233 390h2v2h-2zM284 390h4v2h-4zM129 392h2v1h-2zM285 392h2v1h-2zM170 394h1v3h-1zM193 395h1v2h-1zM171 397h1v1h-1zM192 397h1v2h-1zM172 398h1v2h-1zM191 399h1v1h-1zM173 400h1v1h-1zM190 400h1v1h-1zM174 401h2v1h-2zM188 401h2v1h-2zM176 402h2v1h-2zM186 402h2v1h-2zM178 403h8v1h-8zM476 499h1v1h-1z"/>
<path fill="#003550" d="M387 121h6v1h-6zM385 122h10v1h-10zM383 123h14v1h-14zM382 124h16v2h-16zM381 126h18v2h-18zM380 128h20v6h-20zM381 134h18v2h-18zM382 136h16v2h-16zM383 138h14v1h-14zM385 139h10v1h-10zM387 140h6v1h-6zM333 167h10v1h-10zM331 168h14v1h-14zM329 169h18v1h-18zM328 170h20v1h-20zM283 171h6v1h-6zM326 171h24v2h-24zM280 172h12v1h-12zM279 173h14v1h-14zM325 173h26v1h-26zM277 174h18v1h-18zM324 174h28v2h-28zM277 175h19v1h-19zM276 176h20v1h-20zM323 176h30v2h-30zM275 177h22v2h-22zM322 178h32v10h-32zM275 179h23v1h-23zM274 180h24v6h-24zM275 186h23v1h-23zM275 187h22v2h-22zM323 188h30v2h-30zM276 189h20v1h-20zM277 190h19v1h-19zM324 190h28v2h-28zM277 191h18v1h-18zM278 192h16v1h-16zM325 192h26v1h-26zM280 193h12v1h-12zM326 193h24v2h-24zM282 194h8v1h-8zM328 195h20v1h-20zM329 196h18v1h-18zM331 197h14v1h-14zM333 198h10v1h-10zM75 226h6v1h-6zM73 227h10v1h-10zM72 228h12v1h-12zM71 229h14v1h-14zM70 230h16v2h-16zM24 231h4v1h-4zM23 232h6v1h-6zM69 232h18v6h-18zM285 232h2v1h-2zM22 233h8v4h-8zM284 233h4v1h-4zM283 234h6v2h-6zM284 236h4v1h-4zM23 237h6v1h-6zM285 237h2v1h-2zM24 238h4v1h-4zM70 238h16v2h-16zM71 240h14v1h-14zM72 241h12v1h-12zM73 242h10v1h-10zM75 243h6v1h-6zM385 267h9v1h-9zM383 268h15v1h-15zM381 269h19v1h-19zM378 270h23v1h-23zM377 271h26v1h-26zM73 272h10v1h-10zM376 272h28v1h-28zM71 273h14v1h-14zM375 273h30v1h-30zM70 274h16v1h-16zM374 274h32v1h-32zM68 275h20v1h-20zM374 275h33v1h-33zM67 276h22v1h-22zM373 276h34v1h-34zM66 277h24v2h-24zM372 277h35v1h-35zM372 278h36v1h-36zM65 279h26v1h-26zM371 279h37v1h-37zM64 280h28v2h-28zM371 280h38v2h-38zM63 282h30v10h-30zM371 282h39v1h-39zM370 283h40v8h-40zM181 286h2v2h-2zM370 291h39v1h-39zM64 292h28v2h-28zM371 292h38v2h-38zM65 294h26v1h-26zM372 294h37v1h-37zM66 295h24v2h-24zM372 295h36v1h-36zM373 296h35v1h-35zM67 297h22v1h-22zM373 297h34v1h-34zM68 298h20v1h-20zM373 298h33v1h-33zM70 299h16v1h-16zM374 299h32v1h-32zM71 300h14v1h-14zM375 300h30v1h-30zM73 301h10v1h-10zM376 301h28v1h-28zM377 302h26v1h-26zM379 303h23v1h-23zM380 304h19v1h-19zM382 305h15v1h-15zM386 306h9v1h-9zM125 322h10v1h-10zM123 323h14v1h-14zM122 324h16v1h-16zM120 325h20v1h-20zM118 326h24v1h-24zM117 327h26v2h-26zM116 329h28v2h-28zM115 331h30v1h-30zM114 332h32v2h-32zM113 334h34v10h-34zM181 337h2v1h-2zM180 338h4v2h-4zM181 340h2v1h-2zM114 344h32v2h-32zM115 346h30v1h-30zM116 347h28v2h-28zM117 349h26v2h-26zM118 351h24v1h-24zM120 352h20v1h-20zM122 353h16v1h-16zM123 354h14v1h-14zM125 355h10v1h-10zM179 379h6v1h-6zM176 380h12v1h-12zM175 381h14v1h-14zM173 382h18v1h-18zM173 383h19v1h-19zM172 384h20v1h-20zM171 385h22v2h-22zM171 387h23v1h-23zM170 388h24v6h-24zM171 394h23v1h-23zM171 395h22v2h-22zM172 397h20v1h-20zM173 398h19v1h-19zM173 399h18v1h-18zM174 400h16v1h-16zM176 401h12v1h-12zM178 402h8v1h-8z"/>
<path fill="#aaff00" d="M233 233h2v1h-2zM232 234h4v2h-4zM233 236h2v1h-2zM283 275h6v1h-6zM280 276h3v1h-3zM289 276h3v1h-3zM279 277h1v1h-1zM292 277h1v1h-1zM278 278h1v1h-1zM293 278h1v1h-1zM277 279h1v1h-1zM294 279h1v1h-1zM276 280h1v1h-1zM295 280h1v1h-1zM275 281h1v3h-1zM296 281h1v3h-1zM274 284h1v6h-1zM297 284h1v6h-1zM233 286h2v2h-2zM536 286h20v1h-20zM275 290h1v3h-1zM296 290h1v3h-1zM276 293h1v1h-1zM295 293h1v1h-1zM277 294h1v1h-1zM294 294h1v1h-1zM278 295h1v1h-1zM293 295h1v1h-1zM279 296h1v1h-1zM292 296h1v1h-1zM280 297h3v1h-3zM289 297h3v1h-3zM283 298h6v1h-6zM336 318h4v1h-4zM332 319h4v1h-4zM340 319h4v1h-4zM328 320h4v1h-4zM344 320h4v1h-4zM327 321h1v1h-1zM348 321h1v1h-1zM326 322h1v1h-1zM349 322h1v1h-1zM325 323h1v1h-1zM350 323h1v1h-1zM324 324h1v1h-1zM351 324h1v1h-1zM386 324h8v1h-8zM323 325h1v1h-1zM352 325h1v1h-1zM384 325h2v1h-2zM394 325h2v1h-2zM322 326h1v1h-1zM353 326h1v1h-1zM382 326h2v1h-2zM396 326h2v1h-2zM321 327h1v1h-1zM354 327h1v1h-1zM380 327h2v1h-2zM398 327h2v1h-2zM320 328h1v1h-1zM355 328h1v1h-1zM379 328h1v1h-1zM400 328h1v1h-1zM319 329h1v4h-1zM356 329h1v4h-1zM378 329h1v2h-1zM401 329h1v2h-1zM377 331h1v2h-1zM402 331h1v2h-1zM318 333h1v4h-1zM357 333h1v4h-1zM376 333h1v2h-1zM403 333h1v2h-1zM375 335h1v8h-1zM404 335h1v8h-1zM232 337h4v1h-4zM284 337h4v1h-4zM317 337h1v4h-1zM358 337h1v4h-1zM232 338h1v3h-1zM235 338h1v3h-1zM284 338h1v3h-1zM287 338h1v3h-1zM536 339h1v1h-1zM233 340h2v1h-2zM285 340h2v1h-2zM318 341h1v4h-1zM357 341h1v4h-1zM376 343h1v2h-1zM403 343h1v2h-1zM319 345h1v4h-1zM356 345h1v4h-1zM377 345h1v2h-1zM402 345h1v2h-1zM378 347h1v2h-1zM401 347h1v2h-1zM320 349h1v1h-1zM355 349h1v1h-1zM379 349h1v1h-1zM400 349h1v1h-1zM321 350h1v1h-1zM354 350h1v1h-1zM380 350h2v1h-2zM398 350h2v1h-2zM322 351h1v1h-1zM353 351h1v1h-1zM382 351h2v1h-2zM396 351h2v1h-2zM323 352h1v1h-1zM352 352h1v1h-1zM384 352h2v1h-2zM394 352h2v1h-2zM324 353h1v1h-1zM351 353h1v1h-1zM386 353h8v1h-8zM325 354h1v1h-1zM350 354h1v1h-1zM326 355h1v1h-1zM349 355h1v1h-1zM327 356h1v1h-1zM348 356h1v1h-1zM328 357h4v1h-4zM344 357h4v1h-4zM332 358h4v1h-4zM340 358h4v1h-4zM336 359h4v1h-4zM389 388h2v1h-2zM388 389h4v1h-4zM337 390h2v2h-2zM387 390h2v2h-2zM391 390h2v2h-2zM388 392h4v1h-4zM389 393h2v1h-2zM436 439h1v1h-1zM596 439h1v1h-1zM536 499h1v1h-1z"/>
<path fill="#355000" d="M283 276h6v1h-6zM280 277h12v1h-12zM279 278h14v1h-14zM278 279h16v1h-16zM277 280h18v1h-18zM276 281h20v3h-20zM275 284h22v6h-22zM276 290h20v3h-20zM277 293h18v1h-18zM278 294h16v1h-16zM279 295h14v1h-14zM280 296h12v1h-12zM283 297h6v1h-6zM336 319h4v1h-4zM332 320h12v1h-12zM328 321h20v1h-20zM327 322h22v1h-22zM326 323h24v1h-24zM325 324h26v1h-26zM324 325h28v1h-28zM386 325h8v1h-8zM323 326h30v1h-30zM384 326h12v1h-12zM322 327h32v1h-32zM382 327h16v1h-16zM321 328h34v1h-34zM380 328h20v1h-20zM320 329h36v4h-36zM379 329h22v2h-22zM378 331h24v2h-24zM319 333h38v4h-38zM377 333h26v2h-26zM376 335h28v8h-28zM318 337h40v4h-40zM233 338h2v2h-2zM285 338h2v2h-2zM319 341h38v4h-38zM377 343h26v2h-26zM320 345h36v4h-36zM378 345h24v2h-24zM379 347h22v2h-22zM321 349h34v1h-34zM380 349h20v1h-20zM322 350h32v1h-32zM382 350h16v1h-16zM323 351h30v1h-30zM384 351h12v1h-12zM324 352h28v1h-28zM386 352h8v1h-8zM325 353h26v1h-26zM326 354h24v1h-24zM327 355h22v1h-22zM328 356h20v1h-20zM332 357h12v1h-12zM336 358h4v1h-4zM389 390h2v2h-2z"/>
<path fill="#ffaa00" d="M556 311h20v1h-20zM556 339h1v1h-1zM436 459h1v1h-1zM596 459h1v1h-1zM556 499h1v1h-1z"/>
<path fill="#aa00ff" d="M436 318h20v1h-20zM436 339h1v1h-1zM596 339h1v1h-1z"/>
<path fill="#ff0000" d="M576 319h20v1h-20zM576 339h20v1h-20zM8 474h3v1h-3zM8 475h1v7h-1zM10 475h1v1h-1zM11 476h1v2h-1zM19 477h1v1h-1zM12 478h1v1h-1zM18 478h1v2h-1zM20 478h1v2h-1zM10 479h1v2h-1zM13 479h1v1h-1zM436 479h1v21h-1zM596 479h1v21h-1zM14 480h2v1h-2zM17 480h1v2h-1zM21 480h1v1h-1zM185 480h2v1h-2zM247 480h1v1h-1zM349 480h1v1h-1zM385 480h1v1h-1zM15 481h1v1h-1zM22 481h1v2h-1zM27 481h1v1h-1zM71 481h5v1h-5zM94 481h1v1h-1zM99 481h2v1h-2zM116 481h1v1h-1zM123 481h2v1h-2zM183 481h2v1h-2zM199 481h1v1h-1zM209 481h1v1h-1zM215 481h1v1h-1zM227 481h1v1h-1zM229 481h1v1h-1zM232 481h2v1h-2zM246 481h1v2h-1zM249 481h2v1h-2zM267 481h2v1h-2zM295 481h1v1h-1zM310 481h3v1h-3zM332 481h5v1h-5zM350 481h2v1h-2zM354 481h2v1h-2zM361 481h1v1h-1zM368 481h3v1h-3zM384 481h1v1h-1zM386 481h1v1h-1zM389 481h3v1h-3zM393 481h1v1h-1zM7 482h1v5h-1zM9 482h1v3h-1zM16 482h1v1h-1zM46 482h1v1h-1zM57 482h1v1h-1zM65 482h1v1h-1zM69 482h2v1h-2zM83 482h2v1h-2zM92 482h2v1h-2zM95 482h2v1h-2zM98 482h1v1h-1zM101 482h1v1h-1zM109 482h1v1h-1zM113 482h1v1h-1zM115 482h1v1h-1zM117 482h1v1h-1zM122 482h1v1h-1zM125 482h2v1h-2zM129 482h1v1h-1zM140 482h1v1h-1zM145 482h1v1h-1zM156 482h2v1h-2zM167 482h1v1h-1zM182 482h1v1h-1zM193 482h1v1h-1zM198 482h1v2h-1zM200 482h1v1h-1zM204 482h2v1h-2zM207 482h2v1h-2zM210 482h1v1h-1zM213 482h2v1h-2zM216 482h2v1h-2zM226 482h1v1h-1zM230 482h1v1h-1zM241 482h3v1h-3zM252 482h1v1h-1zM265 482h2v1h-2zM270 482h2v1h-2zM289 482h2v1h-2zM294 482h1v1h-1zM296 482h1v1h-1zM307 482h3v1h-3zM313 482h3v1h-3zM317 482h2v1h-2zM320 482h1v1h-1zM329 482h1v1h-1zM331 482h1v1h-1zM338 482h2v1h-2zM347 482h1v1h-1zM352 482h2v1h-2zM357 482h4v1h-4zM364 482h1v1h-1zM383 482h1v1h-1zM387 482h2v1h-2zM394 482h1v2h-1zM400 482h1v1h-1zM406 482h2v1h-2zM411 482h2v1h-2zM23 483h1v2h-1zM26 483h1v3h-1zM29 483h1v1h-1zM39 483h3v1h-3zM45 483h1v1h-1zM47 483h1v1h-1zM56 483h1v1h-1zM58 483h2v1h-2zM64 483h1v1h-1zM66 483h1v1h-1zM68 483h1v1h-1zM77 483h1v1h-1zM82 483h1v1h-1zM85 483h5v1h-5zM91 483h1v1h-1zM97 483h1v1h-1zM102 483h1v1h-1zM105 483h3v1h-3zM111 483h2v1h-2zM118 483h1v1h-1zM127 483h2v1h-2zM130 483h1v1h-1zM133 483h4v1h-4zM139 483h1v1h-1zM142 483h2v1h-2zM146 483h1v1h-1zM154 483h2v1h-2zM158 483h2v1h-2zM166 483h1v1h-1zM170 483h2v1h-2zM173 483h1v1h-1zM180 483h2v1h-2zM189 483h1v1h-1zM194 483h2v1h-2zM201 483h1v1h-1zM206 483h1v1h-1zM211 483h1v1h-1zM218 483h1v1h-1zM234 483h1v1h-1zM239 483h1v1h-1zM244 483h2v1h-2zM253 483h2v1h-2zM259 483h2v1h-2zM263 483h2v1h-2zM272 483h3v1h-3zM282 483h1v1h-1zM287 483h1v1h-1zM298 483h1v1h-1zM305 483h2v1h-2zM316 483h1v1h-1zM322 483h2v1h-2zM328 483h1v1h-1zM340 483h2v1h-2zM346 483h1v1h-1zM365 483h1v1h-1zM371 483h1v1h-1zM381 483h2v1h-2zM401 483h2v1h-2zM405 483h1v1h-1zM415 483h1v1h-1zM30 484h1v1h-1zM36 484h3v1h-3zM42 484h1v1h-1zM50 484h5v1h-5zM60 484h1v1h-1zM67 484h1v1h-1zM79 484h3v1h-3zM103 484h2v1h-2zM132 484h1v1h-1zM137 484h2v1h-2zM147 484h2v1h-2zM152 484h1v1h-1zM160 484h3v1h-3zM164 484h2v1h-2zM174 484h6v1h-6zM197 484h1v1h-1zM202 484h1v1h-1zM220 484h2v1h-2zM236 484h3v1h-3zM255 484h1v1h-1zM258 484h1v1h-1zM262 484h1v1h-1zM278 484h1v1h-1zM285 484h2v1h-2zM302 484h1v1h-1zM304 484h1v1h-1zM324 484h3v1h-3zM342 484h3v1h-3zM395 484h1v1h-1zM403 484h2v1h-2zM24 485h2v1h-2zM31 485h1v1h-1zM35 485h1v1h-1zM100 485h1v1h-1zM149 485h1v1h-1zM222 485h1v1h-1zM349 485h1v1h-1zM377 485h2v1h-2zM13 486h1v1h-1zM20 486h1v1h-1zM32 486h1v1h-1zM34 486h1v1h-1zM57 486h1v1h-1zM99 486h1v1h-1zM101 486h1v1h-1zM247 486h1v1h-1zM348 486h1v2h-1zM350 486h1v1h-1zM6 487h1v7h-1zM21 487h1v2h-1zM33 487h1v1h-1zM46 487h1v1h-1zM56 487h1v2h-1zM58 487h1v1h-1zM65 487h2v1h-2zM71 487h5v1h-5zM93 487h2v1h-2zM97 487h2v1h-2zM102 487h1v1h-1zM123 487h1v1h-1zM137 487h2v1h-2zM157 487h2v1h-2zM167 487h1v1h-1zM183 487h3v1h-3zM201 487h2v1h-2zM218 487h3v1h-3zM232 487h1v1h-1zM246 487h1v1h-1zM248 487h1v1h-1zM264 487h2v1h-2zM291 487h1v1h-1zM295 487h1v1h-1zM307 487h1v1h-1zM312 487h1v1h-1zM338 487h4v1h-4zM351 487h1v1h-1zM369 487h2v1h-2zM385 487h1v1h-1zM401 487h1v1h-1zM39 488h2v1h-2zM45 488h1v1h-1zM47 488h1v1h-1zM59 488h1v2h-1zM64 488h1v2h-1zM67 488h4v1h-4zM76 488h1v2h-1zM79 488h14v1h-14zM95 488h2v1h-2zM103 488h1v2h-1zM107 488h2v1h-2zM111 488h6v1h-6zM120 488h3v1h-3zM124 488h1v1h-1zM127 488h2v1h-2zM134 488h3v1h-3zM139 488h1v1h-1zM142 488h1v1h-1zM155 488h2v1h-2zM159 488h1v1h-1zM166 488h1v1h-1zM168 488h2v1h-2zM181 488h2v1h-2zM186 488h2v1h-2zM199 488h2v1h-2zM203 488h1v1h-1zM208 488h2v1h-2zM216 488h2v1h-2zM221 488h2v1h-2zM227 488h2v1h-2zM231 488h1v1h-1zM233 488h1v2h-1zM241 488h5v1h-5zM249 488h4v1h-4zM262 488h2v1h-2zM266 488h2v1h-2zM289 488h2v1h-2zM292 488h1v2h-1zM294 488h1v2h-1zM296 488h1v2h-1zM305 488h2v1h-2zM308 488h2v1h-2zM313 488h2v1h-2zM317 488h3v1h-3zM330 488h2v1h-2zM336 488h2v1h-2zM342 488h1v1h-1zM347 488h1v2h-1zM352 488h2v1h-2zM357 488h5v1h-5zM366 488h3v1h-3zM371 488h1v2h-1zM384 488h1v1h-1zM386 488h1v1h-1zM392 488h2v1h-2zM397 488h2v1h-2zM400 488h1v2h-1zM402 488h2v1h-2zM408 488h2v1h-2zM22 489h1v2h-1zM28 489h2v1h-2zM37 489h2v1h-2zM41 489h1v1h-1zM44 489h1v2h-1zM48 489h1v1h-1zM53 489h3v1h-3zM78 489h1v1h-1zM106 489h1v2h-1zM109 489h2v1h-2zM117 489h3v1h-3zM125 489h2v1h-2zM129 489h3v1h-3zM133 489h1v1h-1zM140 489h2v1h-2zM143 489h2v1h-2zM148 489h1v1h-1zM153 489h2v1h-2zM160 489h1v1h-1zM165 489h1v1h-1zM170 489h2v1h-2zM174 489h5v1h-5zM180 489h1v1h-1zM188 489h1v2h-1zM191 489h2v1h-2zM198 489h1v2h-1zM204 489h4v1h-4zM210 489h1v2h-1zM214 489h2v1h-2zM223 489h1v1h-1zM226 489h1v2h-1zM229 489h2v1h-2zM239 489h2v1h-2zM253 489h2v1h-2zM261 489h1v1h-1zM268 489h3v1h-3zM282 489h1v1h-1zM287 489h2v1h-2zM304 489h1v2h-1zM310 489h1v1h-1zM315 489h2v1h-2zM320 489h2v1h-2zM329 489h1v1h-1zM332 489h4v1h-4zM343 489h1v1h-1zM346 489h1v1h-1zM354 489h3v1h-3zM362 489h1v1h-1zM364 489h2v1h-2zM382 489h2v1h-2zM387 489h5v1h-5zM394 489h1v2h-1zM396 489h1v2h-1zM399 489h1v1h-1zM404 489h1v2h-1zM407 489h1v1h-1zM410 489h6v1h-6zM26 490h1v1h-1zM30 490h2v1h-2zM36 490h1v1h-1zM42 490h1v1h-1zM49 490h4v1h-4zM60 490h1v1h-1zM63 490h1v2h-1zM77 490h1v1h-1zM104 490h1v1h-1zM132 490h1v1h-1zM145 490h1v1h-1zM147 490h1v1h-1zM149 490h1v1h-1zM151 490h2v1h-2zM161 490h2v1h-2zM164 490h1v1h-1zM172 490h2v1h-2zM179 490h1v1h-1zM190 490h1v1h-1zM193 490h3v1h-3zM212 490h2v1h-2zM224 490h1v1h-1zM234 490h2v1h-2zM238 490h1v1h-1zM255 490h1v1h-1zM260 490h1v1h-1zM271 490h2v1h-2zM280 490h2v1h-2zM283 490h2v1h-2zM286 490h1v1h-1zM293 490h1v1h-1zM297 490h2v1h-2zM322 490h2v1h-2zM328 490h1v1h-1zM344 490h2v1h-2zM363 490h1v1h-1zM372 490h1v2h-1zM380 490h2v1h-2zM406 490h1v1h-1zM16 491h1v1h-1zM23 491h1v1h-1zM32 491h2v1h-2zM35 491h1v1h-1zM43 491h1v1h-1zM61 491h1v1h-1zM105 491h1v1h-1zM146 491h1v1h-1zM150 491h1v1h-1zM163 491h1v1h-1zM189 491h1v1h-1zM196 491h2v1h-2zM211 491h1v1h-1zM225 491h1v1h-1zM236 491h2v1h-2zM256 491h4v1h-4zM273 491h7v1h-7zM285 491h1v1h-1zM299 491h5v1h-5zM324 491h4v1h-4zM375 491h5v1h-5zM395 491h1v1h-1zM405 491h1v1h-1zM24 492h1v2h-1zM34 492h1v1h-1zM62 492h1v1h-1zM373 492h2v1h-2zM25 493h1v2h-1zM5 494h1v19h-1zM576 499h20v1h-20zM4 507h1v4h-1zM3 511h1v2h-1zM2 513h1v3h-1zM4 515h1v4h-1zM1 516h1v11h-1zM4 520h1v7h-1zM2 527h2v1h-2z"/>
<path fill="#a200ff" d="M437 339h1v1h-1zM436 340h1v1h-1zM596 340h1v1h-1zM437 499h1v1h-1z"/>
<path fill="#9900ff" d="M438 339h1v1h-1zM436 341h1v1h-1zM596 341h1v1h-1zM438 499h1v1h-1z"/>
<path fill="#9000ff" d="M439 339h1v1h-1zM436 342h1v1h-1zM596 342h1v1h-1zM439 499h1v1h-1z"/>
<path fill="#8800ff" d="M440 339h1v1h-1zM436 343h1v1h-1zM596 343h1v1h-1zM440 499h1v1h-1z"/>
<path fill="#8000ff" d="M441 339h1v1h-1zM436 344h1v1h-1zM596 344h1v1h-1zM441 499h1v1h-1z"/>
<path fill="#7700ff" d="M442 339h1v1h-1zM436 345h1v1h-1zM596 345h1v1h-1zM442 499h1v1h-1z"/>
<path fill="#6f00ff" d="M443 339h1v1h-1zM436 346h1v1h-1zM596 346h1v1h-1zM443 499h1v1h-1z"/>
<path fill="#6600ff" d="M444 339h1v1h-1zM436 347h1v1h-1zM596 347h1v1h-1zM444 499h1v1h-1z"/>
<path fill="#5d00ff" d="M445 339h1v1h-1zM436 348h1v1h-1zM596 348h1v1h-1zM445 499h1v1h-1z"/>
<path fill="#5500ff" d="M446 339h1v1h-1zM436 349h1v1h-1zM596 349h1v1h-1zM446 499h1v1h-1z"/>
<path fill="#4c00ff" d="M447 339h1v1h-1zM436 350h1v1h-1zM596 350h1v1h-1zM447 499h1v1h-1z"/>
<path fill="#4400ff" d="M448 339h1v1h-1zM436 351h1v1h-1zM596 351h1v1h-1zM448 499h1v1h-1z"/>
<path fill="#3c00ff" d="M449 339h1v1h-1zM436 352h1v1h-1zM596 352h1v1h-1zM449 499h1v1h-1z"/>
<path fill="#3300ff" d="M450 339h1v1h-1zM436 353h1v1h-1zM596 353h1v1h-1zM450 499h1v1h-1z"/>
<path fill="#2b00ff" d="M451 339h1v1h-1zM436 354h1v1h-1zM596 354h1v1h-1zM451 499h1v1h-1z"/>
<path fill="#2200ff" d="M452 339h1v1h-1zM436 355h1v1h-1zM596 355h1v1h-1zM452 499h1v1h-1z"/>
<path fill="#1900ff" d="M453 339h1v1h-1zM436 356h1v1h-1zM596 356h1v1h-1zM453 499h1v1h-1z"/>
<path fill="#1100ff" d="M454 339h1v1h-1zM436 357h1v1h-1zM596 357h1v1h-1zM454 499h1v1h-1z"/>
<path fill="#0800ff" d="M455 339h1v1h-1zM436 358h1v1h-1zM596 358h1v1h-1zM455 499h1v1h-1z"/>
<path fill="#0008ff" d="M457 339h1v1h-1zM436 360h1v1h-1zM596 360h1v1h-1zM457 499h1v1h-1z"/>
<path fill="#0011ff" d="M458 339h1v1h-1zM436 361h1v1h-1zM596 361h1v1h-1zM458 499h1v1h-1z"/>
<path fill="#001aff" d="M459 339h1v1h-1zM436 362h1v1h-1zM596 362h1v1h-1zM459 499h1v1h-1z"/>
<path fill="#0022ff" d="M460 339h1v1h-1zM436 363h1v1h-1zM596 363h1v1h-1zM460 499h1v1h-1z"/>
<path fill="#002aff" d="M461 339h1v1h-1zM436 364h1v1h-1zM596 364h1v1h-1zM461 499h1v1h-1z"/>
<path fill="#0033ff" d="M462 339h1v1h-1zM436 365h1v1h-1zM596 365h1v1h-1zM462 499h1v1h-1z"/>
<path fill="#003cff" d="M463 339h1v1h-1zM436 366h1v1h-1zM596 366h1v1h-1zM463 499h1v1h-1z"/>
<path fill="#0044ff" d="M464 339h1v1h-1zM436 367h1v1h-1zM596 367h1v1h-1zM464 499h1v1h-1z"/>
<path fill="#004cff" d="M465 339h1v1h-1zM436 368h1v1h-1zM596 368h1v1h-1zM465 499h1v1h-1z"/>
<path fill="#0055ff" d="M466 339h1v1h-1zM436 369h1v1h-1zM596 369h1v1h-1zM466 499h1v1h-1z"/>
<path fill="#005eff" d="M467 339h1v1h-1zM436 370h1v1h-1zM596 370h1v1h-1zM467 499h1v1h-1z"/>
<path fill="#0066ff" d="M468 339h1v1h-1zM436 371h1v1h-1zM596 371h1v1h-1zM468 499h1v1h-1z"/>
<path fill="#006eff" d="M469 339h1v1h-1zM436 372h1v1h-1zM596 372h1v1h-1zM469 499h1v1h-1z"/>
<path fill="#0077ff" d="M470 339h1v1h-1zM436 373h1v1h-1zM596 373h1v1h-1zM470 499h1v1h-1z"/>
<path fill="#0080ff" d="M471 339h1v1h-1zM436 374h1v1h-1zM596 374h1v1h-1zM471 499h1v1h-1z"/>
<path fill="#0088ff" d="M472 339h1v1h-1zM436 375h1v1h-1zM596 375h1v1h-1zM472 499h1v1h-1z"/>
<path fill="#0091ff" d="M473 339h1v1h-1zM436 376h1v1h-1zM596 376h1v1h-1zM473 499h1v1h-1z"/>
<path fill="#0099ff" d="M474 339h1v1h-1zM436 377h1v1h-1zM596 377h1v1h-1zM474 499h1v1h-1z"/>
<path fill="#00a2ff" d="M475 339h1v1h-1zM436 378h1v1h-1zM596 378h1v1h-1zM475 499h1v1h-1z"/>
<path fill="#00b3ff" d="M477 339h1v1h-1zM436 380h1v1h-1zM596 380h1v1h-1zM477 499h1v1h-1z"/>
<path fill="#00bbff" d="M478 339h1v1h-1zM436 381h1v1h-1zM596 381h1v1h-1zM478 499h1v1h-1z"/>
<path fill="#00c3ff" d="M479 339h1v1h-1zM436 382h1v1h-1zM596 382h1v1h-1zM479 499h1v1h-1z"/>
<path fill="#00ccff" d="M480 339h1v1h-1zM436 383h1v1h-1zM596 383h1v1h-1zM480 499h1v1h-1z"/>
<path fill="#00d5ff" d="M481 339h1v1h-1zM436 384h1v1h-1zM596 384h1v1h-1zM481 499h1v1h-1z"/>
<path fill="#00ddff" d="M482 339h1v1h-1zM436 385h1v1h-1zM596 385h1v1h-1zM482 499h1v1h-1z"/>
<path fill="#00e5ff" d="M483 339h1v1h-1zM436 386h1v1h-1zM596 386h1v1h-1zM483 499h1v1h-1z"/>
<path fill="#00eeff" d="M484 339h1v1h-1zM436 387h1v1h-1zM596 387h1v1h-1zM484 499h1v1h-1z"/>
<path fill="#00f7ff" d="M485 339h1v1h-1zM436 388h1v1h-1zM596 388h1v1h-1zM485 499h1v1h-1z"/>
<path fill="#00ffff" d="M486 339h1v1h-1zM436 389h1v1h-1zM596 389h1v1h-1zM486 499h1v1h-1z"/>
<path fill="#00fff7" d="M487 339h1v1h-1zM436 390h1v1h-1zM596 390h1v1h-1zM487 499h1v1h-1z"/>
<path fill="#00ffee" d="M488 339h1v1h-1zM436 391h1v1h-1zM596 391h1v1h-1zM488 499h1v1h-1z"/>
<path fill="#00ffe5" d="M489 339h1v1h-1zM436 392h1v1h-1zM596 392h1v1h-1zM489 499h1v1h-1z"/>
<path fill="#00ffdd" d="M490 339h1v1h-1zM436 393h1v1h-1zM596 393h1v1h-1zM490 499h1v1h-1z"/>
<path fill="#00ffd5" d="M491 339h1v1h-1zM436 394h1v1h-1zM596 394h1v1h-1zM491 499h1v1h-1z"/>
<path fill="#00ffcc" d="M492 339h1v1h-1zM436 395h1v1h-1zM596 395h1v1h-1zM492 499h1v1h-1z"/>
<path fill="#00ffc3" d="M493 339h1v1h-1zM436 396h1v1h-1zM596 396h1v1h-1zM493 499h1v1h-1z"/>
<path fill="#00ffbb" d="M494 339h1v1h-1zM436 397h1v1h-1zM596 397h1v1h-1zM494 499h1v1h-1z"/>
<path fill="#00ffb3" d="M495 339h1v1h-1zM436 398h1v1h-1zM596 398h1v1h-1zM495 499h1v1h-1z"/>
<path fill="#00ffa2" d="M497 339h1v1h-1zM436 400h1v1h-1zM596 400h1v1h-1zM497 499h1v1h-1z"/>
<path fill="#00ff99" d="M498 339h1v1h-1zM436 401h1v1h-1zM596 401h1v1h-1zM498 499h1v1h-1z"/>
<path fill="#00ff91" d="M499 339h1v1h-1zM436 402h1v1h-1zM596 402h1v1h-1zM499 499h1v1h-1z"/>
<path fill="#00ff88" d="M500 339h1v1h-1zM436 403h1v1h-1zM596 403h1v1h-1zM500 499h1v1h-1z"/>
<path fill="#00ff80" d="M501 339h1v1h-1zM436 404h1v1h-1zM596 404h1v1h-1zM501 499h1v1h-1z"/>
<path fill="#00ff77" d="M502 339h1v1h-1zM436 405h1v1h-1zM596 405h1v1h-1zM502 499h1v1h-1z"/>
<path fill="#00ff6e" d="M503 339h1v1h-1zM436 406h1v1h-1zM596 406h1v1h-1zM503 499h1v1h-1z"/>
<path fill="#00ff66" d="M504 339h1v1h-1zM436 407h1v1h-1zM596 407h1v1h-1zM504 499h1v1h-1z"/>
<path fill="#00ff5e" d="M505 339h1v1h-1zM436 408h1v1h-1zM596 408h1v1h-1zM505 499h1v1h-1z"/>
<path fill="#00ff55" d="M506 339h1v1h-1zM436 409h1v1h-1zM596 409h1v1h-1zM506 499h1v1h-1z"/>
<path fill="#00ff4c" d="M507 339h1v1h-1zM436 410h1v1h-1zM596 410h1v1h-1zM507 499h1v1h-1z"/>
<path fill="#00ff44" d="M508 339h1v1h-1zM436 411h1v1h-1zM596 411h1v1h-1zM508 499h1v1h-1z"/>
<path fill="#00ff3c" d="M509 339h1v1h-1zM436 412h1v1h-1zM596 412h1v1h-1zM509 499h1v1h-1z"/>
<path fill="#00ff33" d="M510 339h1v1h-1zM436 413h1v1h-1zM596 413h1v1h-1zM510 499h1v1h-1z"/>
<path fill="#00ff2a" d="M511 339h1v1h-1zM436 414h1v1h-1zM596 414h1v1h-1zM511 499h1v1h-1z"/>
<path fill="#00ff22" d="M512 339h1v1h-1zM436 415h1v1h-1zM596 415h1v1h-1zM512 499h1v1h-1z"/>
<path fill="#00ff1a" d="M513 339h1v1h-1zM436 416h1v1h-1zM596 416h1v1h-1zM513 499h1v1h-1z"/>
<path fill="#00ff11" d="M514 339h1v1h-1zM436 417h1v1h-1zM596 417h1v1h-1zM514 499h1v1h-1z"/>
<path fill="#00ff08" d="M515 339h1v1h-1zM436 418h1v1h-1zM596 418h1v1h-1zM515 499h1v1h-1z"/>
<path fill="#09ff00" d="M517 339h1v1h-1zM436 420h1v1h-1zM596 420h1v1h-1zM517 499h1v1h-1z"/>
<path fill="#11ff00" d="M518 339h1v1h-1zM436 421h1v1h-1zM596 421h1v1h-1zM518 499h1v1h-1z"/>
<path fill="#1aff00" d="M519 339h1v1h-1zM436 422h1v1h-1zM596 422h1v1h-1zM519 499h1v1h-1z"/>
<path fill="#22ff00" d="M520 339h1v1h-1zM436 423h1v1h-1zM596 423h1v1h-1zM520 499h1v1h-1z"/>
<path fill="#2bff00" d="M521 339h1v1h-1zM436 424h1v1h-1zM596 424h1v1h-1zM521 499h1v1h-1z"/>
<path fill="#33ff00" d="M522 339h1v1h-1zM436 425h1v1h-1zM596 425h1v1h-1zM522 499h1v1h-1z"/>
<path fill="#3cff00" d="M523 339h1v1h-1zM436 426h1v1h-1zM596 426h1v1h-1zM523 499h1v1h-1z"/>
<path fill="#44ff00" d="M524 339h1v1h-1zM436 427h1v1h-1zM596 427h1v1h-1zM524 499h1v1h-1z"/>
<path fill="#4dff00" d="M525 339h1v1h-1zM436 428h1v1h-1zM596 428h1v1h-1zM525 499h1v1h-1z"/>
<path fill="#55ff00" d="M526 339h1v1h-1zM436 429h1v1h-1zM596 429h1v1h-1zM526 499h1v1h-1z"/>
<path fill="#5eff00" d="M527 339h1v1h-1zM436 430h1v1h-1zM596 430h1v1h-1zM527 499h1v1h-1z"/>
<path fill="#66ff00" d="M528 339h1v1h-1zM436 431h1v1h-1zM596 431h1v1h-1zM528 499h1v1h-1z"/>
<path fill="#6eff00" d="M529 339h1v1h-1zM436 432h1v1h-1zM596 432h1v1h-1zM529 499h1v1h-1z"/>
<path fill="#77ff00" d="M530 339h1v1h-1zM436 433h1v1h-1zM596 433h1v1h-1zM530 499h1v1h-1z"/>
<path fill="#80ff00" d="M531 339h1v1h-1zM436 434h1v1h-1zM596 434h1v1h-1zM531 499h1v1h-1z"/>
<path fill="#88ff00" d="M532 339h1v1h-1zM436 435h1v1h-1zM596 435h1v1h-1zM532 499h1v1h-1z"/>
<path fill="#90ff00" d="M533 339h1v1h-1zM436 436h1v1h-1zM596 436h1v1h-1zM533 499h1v1h-1z"/>
<path fill="#99ff00" d="M534 339h1v1h-1zM436 437h1v1h-1zM596 437h1v1h-1zM534 499h1v1h-1z"/>
<path fill="#a2ff00" d="M535 339h1v1h-1zM436 438h1v1h-1zM596 438h1v1h-1zM535 499h1v1h-1z"/>
<path fill="#b2ff00" d="M537 339h1v1h-1zM436 440h1v1h-1zM596 440h1v1h-1zM537 499h1v1h-1z"/>
<path fill="#bbff00" d="M538 339h1v1h-1zM436 441h1v1h-1zM596 441h1v1h-1zM538 499h1v1h-1z"/>
<path fill="#c3ff00" d="M539 339h1v1h-1zM436 442h1v1h-1zM596 442h1v1h-1zM539 499h1v1h-1z"/>
<path fill="#ccff00" d="M540 339h1v1h-1zM436 443h1v1h-1zM596 443h1v1h-1zM540 499h1v1h-1z"/>
<path fill="#d4ff00" d="M541 339h1v1h-1zM436 444h1v1h-1zM596 444h1v1h-1zM541 499h1v1h-1z"/>
<path fill="#ddff00" d="M542 339h1v1h-1zM436 445h1v1h-1zM596 445h1v1h-1zM542 499h1v1h-1z"/>
<path fill="#e5ff00" d="M543 339h1v1h-1zM436 446h1v1h-1zM596 446h1v1h-1zM543 499h1v1h-1z"/>
<path fill="#eeff00" d="M544 339h1v1h-1zM436 447h1v1h-1zM596 447h1v1h-1zM544 499h1v1h-1z"/>
<path fill="#f6ff00" d="M545 339h1v1h-1zM436 448h1v1h-1zM596 448h1v1h-1zM545 499h1v1h-1z"/>
<path fill="#ffff00" d="M546 339h1v1h-1zM436 449h1v1h-1zM596 449h1v1h-1zM546 499h1v1h-1z"/>
<path fill="#fff600" d="M547 339h1v1h-1zM436 450h1v1h-1zM596 450h1v1h-1zM547 499h1v1h-1z"/>
<path fill="#ffee00" d="M548 339h1v1h-1zM436 451h1v1h-1zM596 451h1v1h-1zM548 499h1v1h-1z"/>
<path fill="#ffe600" d="M549 339h1v1h-1zM436 452h1v1h-1zM596 452h1v1h-1zM549 499h1v1h-1z"/>
<path fill="#ffdd00" d="M550 339h1v1h-1zM436 453h1v1h-1zM596 453h1v1h-1zM550 499h1v1h-1z"/>
<path fill="#ffd400" d="M551 339h1v1h-1zM436 454h1v1h-1zM596 454h1v1h-1zM551 499h1v1h-1z"/>
<path fill="#ffcc00" d="M552 339h1v1h-1zM436 455h1v1h-1zM596 455h1v1h-1zM552 499h1v1h-1z"/>
<path fill="#ffc400" d="M553 339h1v1h-1zM436 456h1v1h-1zM596 456h1v1h-1zM553 499h1v1h-1z"/>
<path fill="#ffbb00" d="M554 339h1v1h-1zM436 457h1v1h-1zM596 457h1v1h-1zM554 499h1v1h-1z"/>
<path fill="#ffb200" d="M555 339h1v1h-1zM436 458h1v1h-1zM596 458h1v1h-1zM555 499h1v1h-1z"/>
<path fill="#ffa200" d="M557 339h1v1h-1zM436 460h1v1h-1zM596 460h1v1h-1zM557 499h1v1h-1z"/>
<path fill="#ff9900" d="M558 339h1v1h-1zM436 461h1v1h-1zM596 461h1v1h-1zM558 499h1v1h-1z"/>
<path fill="#ff9000" d="M559 339h1v1h-1zM436 462h1v1h-1zM596 462h1v1h-1zM559 499h1v1h-1z"/>
<path fill="#ff8800" d="M560 339h1v1h-1zM436 463h1v1h-1zM596 463h1v1h-1zM560 499h1v1h-1z"/>
<path fill="#ff8000" d="M561 339h1v1h-1zM436 464h1v1h-1zM596 464h1v1h-1zM561 499h1v1h-1z"/>
<path fill="#ff7700" d="M562 339h1v1h-1zM436 465h1v1h-1zM596 465h1v1h-1zM562 499h1v1h-1z"/>
<path fill="#ff6e00" d="M563 339h1v1h-1zM436 466h1v1h-1zM596 466h1v1h-1zM563 499h1v1h-1z"/>
<path fill="#ff6600" d="M564 339h1v1h-1zM436 467h1v1h-1zM596 467h1v1h-1zM564 499h1v1h-1z"/>
<path fill="#ff5e00" d="M565 339h1v1h-1zM436 468h1v1h-1zM596 468h1v1h-1zM565 499h1v1h-1z"/>
<path fill="#ff5500" d="M566 339h1v1h-1zM436 469h1v1h-1zM596 469h1v1h-1zM566 499h1v1h-1z"/>
<path fill="#ff4d00" d="M567 339h1v1h-1zM436 470h1v1h-1zM596 470h1v1h-1zM567 499h1v1h-1z"/>
<path fill="#ff4400" d="M568 339h1v1h-1zM436 471h1v1h-1zM596 471h1v1h-1zM568 499h1v1h-1z"/>
<path fill="#ff3c00" d="M569 339h1v1h-1zM436 472h1v1h-1zM596 472h1v1h-1zM569 499h1v1h-1z"/>
<path fill="#ff3300" d="M570 339h1v1h-1zM436 473h1v1h-1zM596 473h1v1h-1zM570 499h1v1h-1z"/>
<path fill="#ff2a00" d="M571 339h1v1h-1zM436 474h1v1h-1zM596 474h1v1h-1zM571 499h1v1h-1z"/>
<path fill="#ff2200" d="M572 339h1v1h-1zM436 475h1v1h-1zM596 475h1v1h-1zM572 499h1v1h-1z"/>
<path fill="#ff1900" d="M573 339h1v1h-1zM436 476h1v1h-1zM596 476h1v1h-1zM573 499h1v1h-1z"/>
<path fill="#ff1100" d="M574 339h1v1h-1zM436 477h1v1h-1zM596 477h1v1h-1zM574 499h1v1h-1z"/>
<path fill="#ff0800" d="M575 339h1v1h-1zM436 478h1v1h-1zM596 478h1v1h-1zM575 499h1v1h-1z"/>
<path fill="#ff6464" d="M263 546h1v2h-1zM308 546h1v2h-1zM65 547h1v4h-1zM68 547h2v1h-2zM133 547h1v1h-1zM199 547h1v1h-1zM228 547h1v2h-1zM264 547h1v2h-1zM309 547h1v2h-1zM316 547h1v1h-1zM331 547h2v1h-2zM381 547h1v2h-1zM389 547h1v4h-1zM64 548h1v2h-1zM68 548h1v1h-1zM70 548h2v1h-2zM79 548h1v1h-1zM88 548h1v1h-1zM132 548h1v1h-1zM134 548h1v1h-1zM198 548h1v1h-1zM200 548h1v1h-1zM229 548h1v2h-1zM254 548h1v2h-1zM262 548h1v2h-1zM273 548h1v1h-1zM299 548h3v1h-3zM307 548h1v3h-1zM315 548h1v2h-1zM317 548h1v1h-1zM329 548h2v1h-2zM332 548h1v1h-1zM380 548h1v1h-1zM388 548h1v1h-1zM396 548h2v1h-2zM67 549h1v4h-1zM72 549h1v1h-1zM78 549h1v1h-1zM80 549h1v1h-1zM87 549h1v2h-1zM89 549h1v1h-1zM99 549h1v1h-1zM114 549h3v1h-3zM126 549h1v1h-1zM131 549h1v1h-1zM135 549h1v2h-1zM148 549h2v1h-2zM177 549h3v1h-3zM191 549h1v1h-1zM197 549h1v2h-1zM201 549h1v2h-1zM207 549h1v1h-1zM219 549h5v1h-5zM227 549h1v4h-1zM244 549h1v1h-1zM255 549h1v1h-1zM265 549h1v2h-1zM272 549h1v1h-1zM274 549h1v1h-1zM291 549h2v1h-2zM298 549h1v1h-1zM302 549h2v1h-2zM310 549h1v2h-1zM318 549h1v2h-1zM322 549h1v1h-1zM328 549h1v2h-1zM333 549h1v2h-1zM339 549h1v1h-1zM351 549h1v1h-1zM379 549h1v1h-1zM382 549h1v2h-1zM387 549h1v1h-1zM395 549h1v2h-1zM398 549h2v1h-2zM406 549h1v1h-1zM413 549h1v1h-1zM63 550h1v2h-1zM73 550h1v1h-1zM77 550h1v1h-1zM81 550h1v1h-1zM90 550h1v1h-1zM97 550h2v1h-2zM100 550h1v1h-1zM113 550h1v1h-1zM117 550h3v1h-3zM125 550h1v2h-1zM127 550h1v2h-1zM130 550h1v1h-1zM145 550h3v1h-3zM150 550h1v2h-1zM169 550h1v1h-1zM176 550h1v1h-1zM180 550h3v1h-3zM190 550h1v1h-1zM192 550h2v1h-2zM206 550h1v1h-1zM208 550h2v1h-2zM218 550h1v1h-1zM224 550h1v2h-1zM230 550h1v1h-1zM234 550h4v1h-4zM242 550h2v1h-2zM245 550h2v1h-2zM253 550h1v2h-1zM256 550h1v1h-1zM261 550h1v3h-1zM271 550h1v2h-1zM275 550h1v1h-1zM284 550h2v1h-2zM290 550h1v1h-1zM293 550h2v1h-2zM296 550h2v1h-2zM304 550h1v1h-1zM314 550h1v1h-1zM321 550h1v2h-1zM323 550h1v1h-1zM338 550h1v1h-1zM340 550h2v1h-2zM350 550h1v1h-1zM352 550h1v2h-1zM369 550h2v1h-2zM378 550h1v1h-1zM386 550h1v1h-1zM400 550h1v2h-1zM405 550h1v1h-1zM407 550h2v1h-2zM412 550h1v1h-1zM414 550h1v1h-1zM60 551h3v1h-3zM66 551h1v4h-1zM74 551h1v1h-1zM76 551h1v1h-1zM82 551h5v1h-5zM91 551h1v1h-1zM95 551h2v1h-2zM101 551h1v1h-1zM105 551h3v1h-3zM112 551h1v1h-1zM120 551h1v1h-1zM129 551h1v1h-1zM136 551h1v1h-1zM144 551h1v1h-1zM153 551h2v1h-2zM168 551h1v1h-1zM170 551h2v1h-2zM175 551h1v1h-1zM183 551h2v1h-2zM188 551h2v1h-2zM194 551h1v1h-1zM196 551h1v1h-1zM202 551h1v1h-1zM204 551h2v1h-2zM210 551h2v1h-2zM216 551h2v1h-2zM231 551h3v1h-3zM238 551h4v1h-4zM247 551h1v1h-1zM257 551h1v1h-1zM266 551h3v1h-3zM276 551h1v1h-1zM283 551h1v1h-1zM286 551h2v1h-2zM289 551h1v1h-1zM295 551h1v1h-1zM305 551h2v1h-2zM311 551h1v2h-1zM313 551h1v2h-1zM319 551h1v1h-1zM324 551h1v1h-1zM327 551h1v2h-1zM334 551h1v2h-1zM337 551h1v2h-1zM342 551h1v1h-1zM349 551h1v1h-1zM358 551h3v1h-3zM365 551h4v1h-4zM371 551h2v1h-2zM377 551h1v1h-1zM383 551h3v1h-3zM390 551h1v3h-1zM394 551h1v2h-1zM404 551h1v2h-1zM409 551h1v1h-1zM411 551h1v1h-1zM415 551h1v1h-1zM37 552h1v4h-1zM55 552h2v1h-2zM59 552h1v1h-1zM75 552h1v1h-1zM92 552h3v1h-3zM102 552h3v1h-3zM108 552h2v1h-2zM111 552h1v1h-1zM121 552h1v1h-1zM124 552h1v2h-1zM128 552h1v1h-1zM137 552h3v1h-3zM142 552h2v1h-2zM151 552h2v1h-2zM155 552h1v1h-1zM159 552h4v1h-4zM166 552h2v1h-2zM172 552h1v1h-1zM174 552h1v1h-1zM185 552h1v1h-1zM187 552h1v1h-1zM195 552h1v1h-1zM203 552h1v1h-1zM212 552h2v1h-2zM215 552h1v1h-1zM225 552h1v2h-1zM248 552h3v1h-3zM252 552h1v2h-1zM258 552h1v1h-1zM269 552h2v1h-2zM277 552h2v1h-2zM282 552h1v2h-1zM288 552h1v1h-1zM306 552h1v1h-1zM320 552h1v1h-1zM325 552h1v1h-1zM343 552h6v1h-6zM353 552h1v1h-1zM356 552h2v1h-2zM361 552h4v1h-4zM373 552h1v1h-1zM375 552h2v1h-2zM383 552h1v1h-1zM401 552h1v2h-1zM410 552h1v1h-1zM54 553h1v2h-1zM57 553h2v1h-2zM110 553h1v1h-1zM122 553h1v1h-1zM140 553h2v1h-2zM156 553h3v1h-3zM163 553h3v1h-3zM173 553h1v1h-1zM186 553h1v1h-1zM214 553h1v1h-1zM226 553h1v2h-1zM251 553h1v1h-1zM259 553h2v1h-2zM279 553h2v1h-2zM312 553h1v1h-1zM326 553h1v1h-1zM335 553h2v1h-2zM354 553h2v1h-2zM374 553h1v1h-1zM391 553h1v1h-1zM393 553h1v2h-1zM403 553h1v1h-1zM38 554h1v2h-1zM123 554h1v1h-1zM260 554h1v1h-1zM281 554h1v1h-1zM335 554h1v1h-1zM392 554h1v1h-1zM402 554h1v1h-1zM42 555h2v1h-2zM50 555h1v1h-1zM53 555h1v2h-1zM36 556h1v4h-1zM39 556h1v2h-1zM41 556h1v2h-1zM44 556h2v1h-2zM49 556h1v2h-1zM51 556h1v1h-1zM30 557h1v1h-1zM46 557h2v1h-2zM52 557h1v1h-1zM26 558h1v1h-1zM28 558h2v1h-2zM31 558h1v1h-1zM40 558h1v2h-1zM48 558h1v1h-1zM25 559h1v2h-1zM27 559h1v1h-1zM32 559h2v1h-2zM34 560h2v1h-2zM24 561h1v2h-1zM23 563h1v3h-1zM22 566h1v2h-1zM21 568h1v3h-1zM16 569h1v2h-1zM17 570h2v1h-2zM15 571h1v3h-1zM19 571h2v1h-2zM20 572h1v1h-1zM14 574h1v1h-1zM13 575h1v1h-1zM8 576h1v2h-1zM12 576h1v1h-1zM11 577h1v1h-1zM7 578h1v5h-1zM9 578h2v1h-2zM6 583h1v5h-1zM5 588h1v4h-1zM4 592h1v3h-1zM3 595h1v1h-1zM2 596h1v2h-1zM1 598h1v8h-1z"/>
</svg>
<p class="t" style="top:10px">Speed: 10</p>
<p class="t" style="top:30px">Generation: 100000 (200/200 frames)</p>
<p class="t" style="top:50px">MaxPopSize: 122.4% (153/125)</p>
<p class="t" style="top:70px">SysSize: 43.6% (3491/8000)</p>
<p class="t" style="top:90px">AvCarCap: 76.0%</p>
<p class="t" style="top:110px">AvPref: 61.4%</p>
<p class="t" style="top:130px">Cramer's V: 71.6%</p>
<p class="t" style="top:150px">Purebred: 89.7%</p>
<p class="t" style="top:170px">AvMatch (fitn): 89.4%</p>
<p class="t" style="top:190px">AvMatch (pref): 85.2%</p>
<p class="t" style="top:299px;left:459px">m</p><p class="t" style="top:299px;left:469px">f</p>
</body></html>
